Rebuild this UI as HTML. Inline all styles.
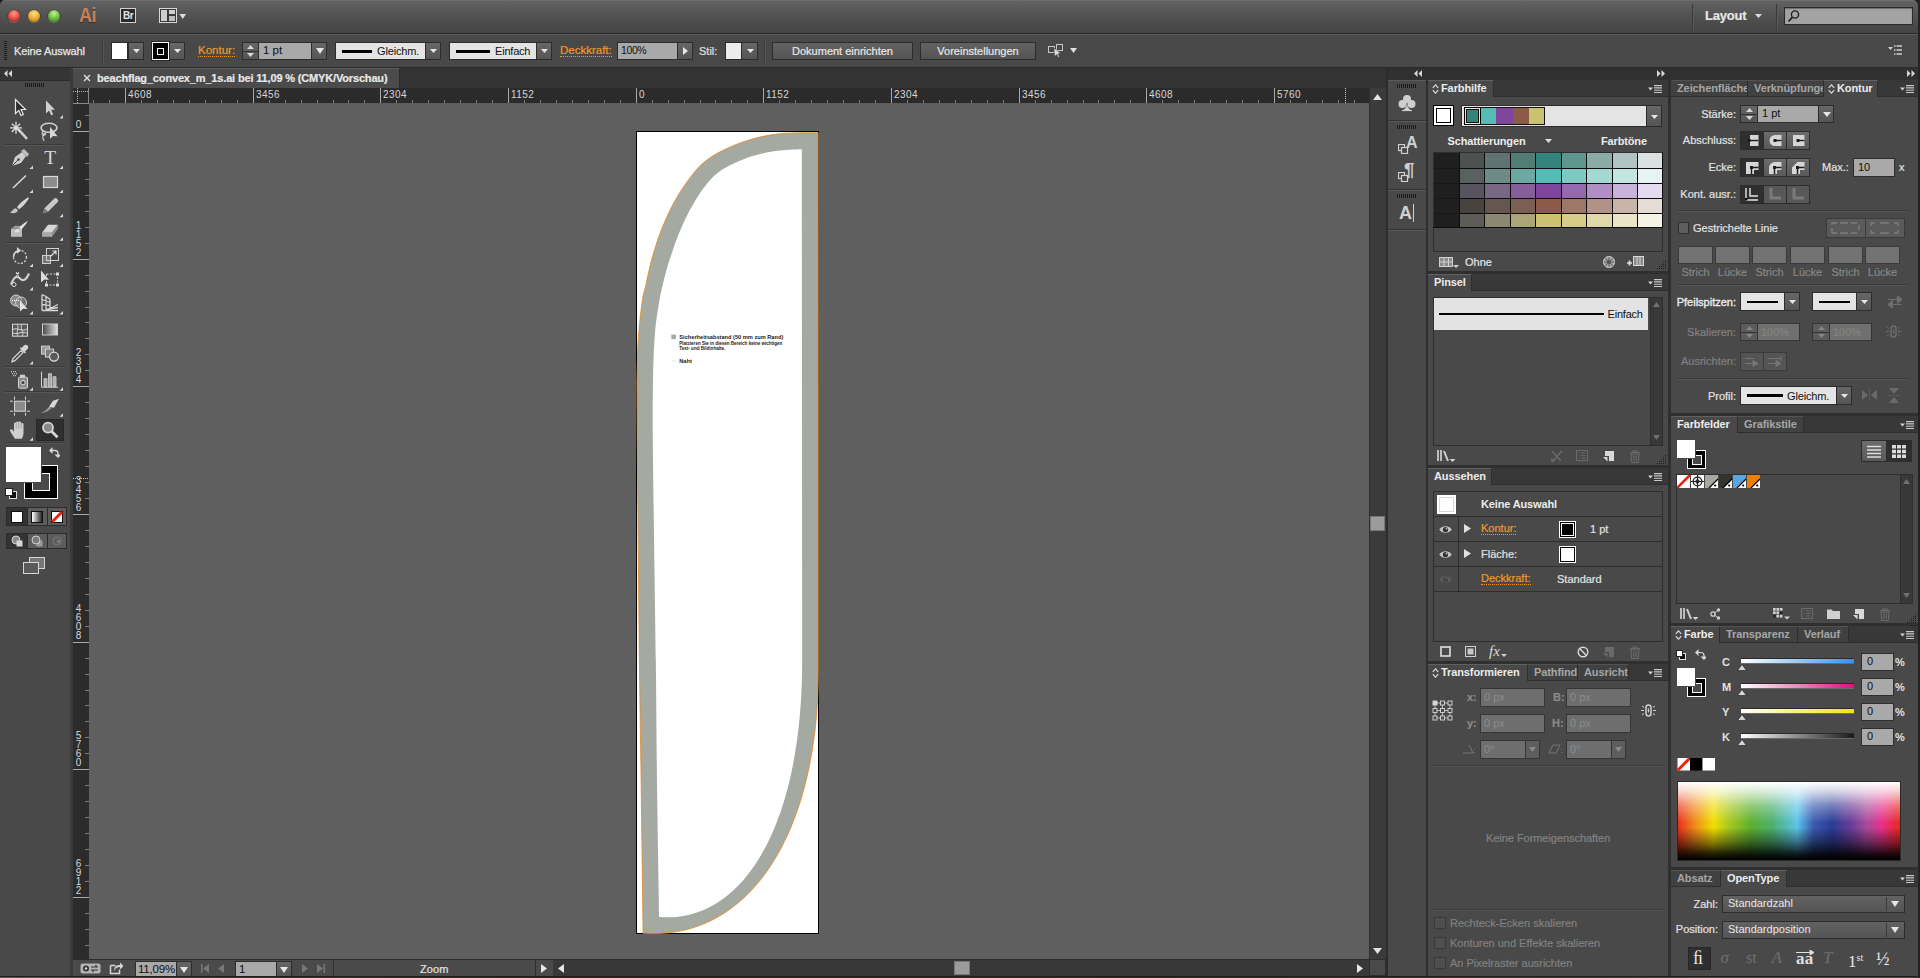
<!DOCTYPE html>
<html lang="de"><head><meta charset="utf-8"><title>beachflag_convex_m_1s.ai</title>
<style>
html,body{margin:0;padding:0;background:#494949;overflow:hidden}
body{width:1920px;height:978px;position:relative;font-family:"Liberation Sans",sans-serif;font-size:11px;color:#dcdcdc}
div,svg{position:absolute;box-sizing:border-box}
.t{white-space:nowrap;line-height:14px;height:14px;font-size:11px;color:#e2e2e2;-webkit-text-stroke:.2px #e2e2e2}
.tb{white-space:nowrap;line-height:14px;height:14px;font-size:11px;color:#ececec;font-weight:bold;letter-spacing:-.1px}
.td{white-space:nowrap;line-height:14px;height:14px;font-size:11px;color:#8a8a8a;-webkit-text-stroke:.2px #8a8a8a}
.tk{white-space:nowrap;line-height:14px;height:14px;font-size:11px;color:#111}
.or{color:#f0982d;border-bottom:1px dotted #f0982d;height:14px;line-height:14px;-webkit-text-stroke:.2px #f0982d}
.rl{white-space:nowrap;font-family:"Liberation Sans",sans-serif;font-size:10px;line-height:10px;color:#d6d6d6;letter-spacing:.4px;transform:scaleY(1.12);transform-origin:0 0}
.inp{background:#a9a9a9;border:1px solid #2e2e2e;color:#111}
.btn{background:linear-gradient(#626262,#545454);border:1px solid #2c2c2c}
.dd{background:linear-gradient(#666,#555);border:1px solid #2c2c2c}
.light{background:#e4e4e4;border:1px solid #2c2c2c}
.tab{background:#494949;border-top:1px solid #5c5c5c}
.tabi{background:#3e3e3e;border-right:1px solid #2e2e2e}
.panel{background:#494949}
.hdr{background:#353535}
</style></head>
<body>
<div style="left:0px;top:0px;width:1920px;height:33px;background:linear-gradient(#626262,#565656 35%,#4b4b4b 70%,#454545);border-top:1px solid #6e6e6e"></div>
<div style="left:0px;top:33px;width:1920px;height:1px;background:#2b2b2b"></div>
<div style="left:0px;top:34px;width:1920px;height:33px;background:#484848;border-top:1px solid #5a5a5a"></div>
<div style="left:0px;top:67px;width:1920px;height:1px;background:#2a2a2a"></div>
<div style="left:8px;top:10px;width:12px;height:12px;border-radius:50%;background:radial-gradient(circle at 50% 30%,#ff9a8a,#e0443e 55%,#8e1d18);box-shadow:0 1px 0 rgba(255,255,255,.25),0 0 0 0.5px rgba(0,0,0,.5)"></div>
<div style="left:28px;top:10px;width:12px;height:12px;border-radius:50%;background:radial-gradient(circle at 50% 30%,#ffe08a,#e7a52c 55%,#99610d);box-shadow:0 1px 0 rgba(255,255,255,.25),0 0 0 0.5px rgba(0,0,0,.5)"></div>
<div style="left:48px;top:10px;width:12px;height:12px;border-radius:50%;background:radial-gradient(circle at 50% 30%,#c9f08e,#62b83a 55%,#2f6f16);box-shadow:0 1px 0 rgba(255,255,255,.25),0 0 0 0.5px rgba(0,0,0,.5)"></div>
<div style="left:78.5px;top:3px;font-size:21px;line-height:24px;font-weight:bold;color:#c48257;letter-spacing:-0.5px;transform:scaleX(.86);transform-origin:0 0;text-shadow:0 1px 0 rgba(0,0,0,.4)">Ai</div>
<div style="left:120px;top:8px;width:16px;height:15px;background:#2b2b2b;border:1px solid #cfcfcf;color:#e6e6e6;font-size:10px;line-height:13px;text-align:center;font-weight:bold;letter-spacing:-0.5px">Br</div>
<svg style="left:159px;top:8px;" width="28" height="15" viewBox="0 0 28 15"><rect x="0.5" y="0.5" width="17" height="14" fill="#3a3a3a" stroke="#d8d8d8"/><rect x="2" y="2" width="6" height="11" fill="#cfcfcf"/><rect x="10" y="2" width="6" height="4" fill="#cfcfcf"/><rect x="10" y="8" width="6" height="5" fill="#bdbdbd"/><path d="M20.5 6h6.5l-3.25 5z" fill="#e0e0e0"/></svg>
<div style="left:1692px;top:4px;width:1px;height:26px;background:#3c3c3c;border-right:1px solid #5a5a5a;width:2px"></div>
<div style="left:1776px;top:4px;width:1px;height:26px;background:#3c3c3c;border-right:1px solid #5a5a5a;width:2px"></div>
<div class="t" style="left:1705px;top:8px;font-size:13px;font-weight:bold;color:#e8e8e8;line-height:16px;height:16px;letter-spacing:-.2px">Layout</div>
<svg style="left:1755px;top:14px;" width="7" height="4" viewBox="0 0 7 4"><path d="M0 0h7l-3.5 4z" fill="#ddd"/></svg>
<div style="left:1784px;top:7px;width:129px;height:18px;background:#a3a3a3;border:1px solid #2a2a2a;box-shadow:inset 0 1px 1px rgba(0,0,0,.35)"></div>
<svg style="left:1787px;top:9px;" width="14" height="14" viewBox="0 0 14 14"><circle cx="8" cy="5.5" r="3.6" fill="none" stroke="#222" stroke-width="1.4"/><path d="M5.4 8.2L1.5 12.5" stroke="#222" stroke-width="1.8"/></svg>
<div style="left:4px;top:41px;width:3px;height:19px;background:repeating-linear-gradient(#1e1e1e 0 1px,transparent 1px 2px)"></div>
<div class="t" style="left:14px;top:44px;color:#e6e6e6;letter-spacing:-.1px;-webkit-text-stroke:.25px #e6e6e6">Keine Auswahl</div>
<div style="left:102px;top:38px;width:1px;height:26px;width:2px;background:#3a3a3a;border-right:1px solid #565656"></div>
<div style="left:111px;top:42px;width:17px;height:18px;background:#fff;border:1px solid #2a2a2a"></div>
<div class="dd" style="left:128px;top:42px;width:16px;height:18px;"><svg style="left:4px;top:6px" width="7" height="4"><path d="M0 0h7l-3.5 4z" fill="#e6e6e6"/></svg></div>
<div style="left:152px;top:42px;width:17px;height:18px;background:#000;border:1px solid #fff;outline:1px solid #2a2a2a"><div style="left:4px;top:4.5px;width:7px;height:7px;border:1.5px solid #fff;background:#000"></div></div>
<div class="dd" style="left:169px;top:42px;width:16px;height:18px;"><svg style="left:4px;top:6px" width="7" height="4"><path d="M0 0h7l-3.5 4z" fill="#e6e6e6"/></svg></div>
<div class="t or" style="left:198px;top:43px;font-size:11.5px">Kontur:</div>
<div class="dd" style="left:242px;top:42px;width:17px;height:18px;"><svg style="left:4px;top:2px" width="7" height="12"><path d="M0 4l3.5-4 3.5 4zM0 8h7l-3.5 4z" fill="#d8d8d8"/></svg><div style="left:0;top:7.5px;width:15px;height:1px;background:#333"></div></div>
<div class="inp" style="left:258px;top:42px;width:54px;height:18px;padding-left:4px;line-height:15px;font-size:11.5px">1 pt</div>
<div class="dd" style="left:311px;top:42px;width:16px;height:18px;"><svg style="left:3.5px;top:5px" width="8" height="6"><path d="M0 0h8l-4 6z" fill="#e6e6e6"/></svg></div>
<div class="light" style="left:335px;top:42px;width:91px;height:18px;"><div style="left:6px;top:6.5px;width:30px;height:3px;background:#000"></div><div class="tk" style="left:41px;top:1px;font-size:11px;letter-spacing:-.15px">Gleichm.</div></div>
<div class="dd" style="left:425px;top:42px;width:16px;height:18px;"><svg style="left:4px;top:6px" width="7" height="4"><path d="M0 0h7l-3.5 4z" fill="#e6e6e6"/></svg></div>
<div class="light" style="left:449px;top:42px;width:88px;height:18px;"><div style="left:6px;top:6.5px;width:34px;height:3px;background:#000"></div><div class="tk" style="left:45px;top:1px;font-size:11px;letter-spacing:-.2px">Einfach</div></div>
<div class="dd" style="left:536px;top:42px;width:16px;height:18px;"><svg style="left:4px;top:6px" width="7" height="4"><path d="M0 0h7l-3.5 4z" fill="#e6e6e6"/></svg></div>
<div class="t or" style="left:560px;top:43px;font-size:11.5px">Deckkraft:</div>
<div class="inp" style="left:617px;top:42px;width:61px;height:18px;padding-left:3px;line-height:15px;font-size:10.5px;letter-spacing:-.4px">100%</div>
<div class="dd" style="left:677px;top:42px;width:16px;height:18px;"><svg style="left:5px;top:4px" width="5" height="8"><path d="M0 0v8l5-4z" fill="#e6e6e6"/></svg></div>
<div class="t" style="left:699px;top:44px;color:#e0e0e0">Stil:</div>
<div style="left:725px;top:42px;width:17px;height:18px;background:#ececec;border:1px solid #2a2a2a"></div>
<div class="dd" style="left:741px;top:42px;width:17px;height:18px;"><svg style="left:4.5px;top:6px" width="7" height="4"><path d="M0 0h7l-3.5 4z" fill="#e6e6e6"/></svg></div>
<div style="left:764px;top:38px;width:1px;height:26px;width:2px;background:#3a3a3a;border-right:1px solid #565656"></div>
<div class="btn" style="left:772px;top:42px;width:141px;height:18px;text-align:center;line-height:16px;color:#e8e8e8;font-size:11px;letter-spacing:0;-webkit-text-stroke:.2px #e8e8e8">Dokument einrichten</div>
<div class="btn" style="left:920px;top:42px;width:116px;height:18px;text-align:center;line-height:16px;color:#e8e8e8;font-size:11px;letter-spacing:0;-webkit-text-stroke:.2px #e8e8e8">Voreinstellungen</div>
<svg style="left:1047px;top:43px;" width="17" height="15" viewBox="0 0 17 15"><rect x="1.5" y="3.5" width="6" height="6" fill="none" stroke="#c8c8c8"/><rect x="9.500" y="1.500" width="6" height="6" fill="none" stroke="#c8c8c8"/><path d="M7 5l7 5.500-3 .3 1.600 3-1.300.6-1.600-3-2 2z" fill="#e0e0e0" stroke="#333" stroke-width=".5"/></svg>
<svg style="left:1070px;top:48px;" width="7" height="5" viewBox="0 0 7 5"><path d="M0 0h7l-3.5 5z" fill="#e0e0e0"/></svg>
<svg style="left:1888px;top:45px;" width="14" height="10" viewBox="0 0 14 10"><path d="M0 2h5l-2.500 3z" fill="#d0d0d0"/><path d="M6 1h1.500M6 5h1.500M6 9h1.500M8.500 1H14M8.500 5H14M8.500 9H14" stroke="#d0d0d0" stroke-width="1.500"/></svg>
<div style="left:70px;top:68px;width:1318px;height:20px;background:#333"></div>
<div style="left:73px;top:68px;width:327px;height:20px;background:#4b4b4b;border-top:1px solid #5e5e5e;border-right:1px solid #2a2a2a"></div>
<svg style="left:83px;top:74px;" width="8" height="8" viewBox="0 0 8 8"><path d="M1 1l6 6M7 1l-6 6" stroke="#e0e0e0" stroke-width="1.400"/></svg>
<div class="t" style="left:97px;top:71px;font-weight:bold;color:#e8e8e8;font-size:11px;letter-spacing:-.16px">beachflag_convex_m_1s.ai bei 11,09 % (CMYK/Vorschau)</div>
<div style="left:70px;top:68px;width:3px;height:910px;background:#3a3a3a"></div>
<div style="left:73px;top:88px;width:1296px;height:16px;background:#2b2b2b"></div>
<div style="left:73px;top:104px;width:16px;height:855px;background:#2b2b2b"></div>
<svg style="left:73px;top:88px;" width="16" height="16" viewBox="0 0 16 16"><path d="M0 3.500h15M4.500 0v15" stroke="#b0b0b0" stroke-width="1" stroke-dasharray="1 1"/><path d="M15.500 0v16M0 15.500h16" stroke="#8a8a8a" stroke-width="1"/></svg>
<div style="left:89px;top:104px;width:1280px;height:855px;background:#5f5f5f"></div>
<svg style="left:73px;top:88px;" width="1296" height="16" viewBox="0 0 1296 16"><path d="M20.5 12v4" stroke="#7c7c7c"/><path d="M36.5 12v4" stroke="#7c7c7c"/><path d="M52.5 0v16" stroke="#a8a8a8"/><path d="M68.5 12v4" stroke="#7c7c7c"/><path d="M84.5 12v4" stroke="#7c7c7c"/><path d="M100.5 12v4" stroke="#7c7c7c"/><path d="M116.5 12v4" stroke="#7c7c7c"/><path d="M132.5 12v4" stroke="#7c7c7c"/><path d="M148.5 12v4" stroke="#7c7c7c"/><path d="M164.5 12v4" stroke="#7c7c7c"/><path d="M180.5 0v16" stroke="#a8a8a8"/><path d="M196.5 12v4" stroke="#7c7c7c"/><path d="M212.5 12v4" stroke="#7c7c7c"/><path d="M228.5 12v4" stroke="#7c7c7c"/><path d="M244.5 12v4" stroke="#7c7c7c"/><path d="M260.5 12v4" stroke="#7c7c7c"/><path d="M275.5 12v4" stroke="#7c7c7c"/><path d="M291.5 12v4" stroke="#7c7c7c"/><path d="M307.5 0v16" stroke="#a8a8a8"/><path d="M323.5 12v4" stroke="#7c7c7c"/><path d="M339.5 12v4" stroke="#7c7c7c"/><path d="M355.5 12v4" stroke="#7c7c7c"/><path d="M371.5 12v4" stroke="#7c7c7c"/><path d="M387.5 12v4" stroke="#7c7c7c"/><path d="M403.5 12v4" stroke="#7c7c7c"/><path d="M419.5 12v4" stroke="#7c7c7c"/><path d="M435.5 0v16" stroke="#a8a8a8"/><path d="M451.5 12v4" stroke="#7c7c7c"/><path d="M467.5 12v4" stroke="#7c7c7c"/><path d="M483.5 12v4" stroke="#7c7c7c"/><path d="M499.5 12v4" stroke="#7c7c7c"/><path d="M515.5 12v4" stroke="#7c7c7c"/><path d="M531.5 12v4" stroke="#7c7c7c"/><path d="M547.5 12v4" stroke="#7c7c7c"/><path d="M563.5 0v16" stroke="#a8a8a8"/><path d="M579.5 12v4" stroke="#7c7c7c"/><path d="M595.5 12v4" stroke="#7c7c7c"/><path d="M611.5 12v4" stroke="#7c7c7c"/><path d="M627.5 12v4" stroke="#7c7c7c"/><path d="M642.5 12v4" stroke="#7c7c7c"/><path d="M658.5 12v4" stroke="#7c7c7c"/><path d="M674.5 12v4" stroke="#7c7c7c"/><path d="M690.5 0v16" stroke="#a8a8a8"/><path d="M706.5 12v4" stroke="#7c7c7c"/><path d="M722.5 12v4" stroke="#7c7c7c"/><path d="M738.5 12v4" stroke="#7c7c7c"/><path d="M754.5 12v4" stroke="#7c7c7c"/><path d="M770.5 12v4" stroke="#7c7c7c"/><path d="M786.5 12v4" stroke="#7c7c7c"/><path d="M802.5 12v4" stroke="#7c7c7c"/><path d="M818.5 0v16" stroke="#a8a8a8"/><path d="M834.5 12v4" stroke="#7c7c7c"/><path d="M850.5 12v4" stroke="#7c7c7c"/><path d="M866.5 12v4" stroke="#7c7c7c"/><path d="M882.5 12v4" stroke="#7c7c7c"/><path d="M898.5 12v4" stroke="#7c7c7c"/><path d="M914.5 12v4" stroke="#7c7c7c"/><path d="M930.5 12v4" stroke="#7c7c7c"/><path d="M946.5 0v16" stroke="#a8a8a8"/><path d="M962.5 12v4" stroke="#7c7c7c"/><path d="M978.5 12v4" stroke="#7c7c7c"/><path d="M994.5 12v4" stroke="#7c7c7c"/><path d="M1010.5 12v4" stroke="#7c7c7c"/><path d="M1025.5 12v4" stroke="#7c7c7c"/><path d="M1041.5 12v4" stroke="#7c7c7c"/><path d="M1057.5 12v4" stroke="#7c7c7c"/><path d="M1073.5 0v16" stroke="#a8a8a8"/><path d="M1089.5 12v4" stroke="#7c7c7c"/><path d="M1105.5 12v4" stroke="#7c7c7c"/><path d="M1121.5 12v4" stroke="#7c7c7c"/><path d="M1137.5 12v4" stroke="#7c7c7c"/><path d="M1153.5 12v4" stroke="#7c7c7c"/><path d="M1169.5 12v4" stroke="#7c7c7c"/><path d="M1185.5 12v4" stroke="#7c7c7c"/><path d="M1201.5 0v16" stroke="#a8a8a8"/><path d="M1217.5 12v4" stroke="#7c7c7c"/><path d="M1233.5 12v4" stroke="#7c7c7c"/><path d="M1249.5 12v4" stroke="#7c7c7c"/><path d="M1265.5 12v4" stroke="#7c7c7c"/><path d="M1281.5 12v4" stroke="#7c7c7c"/></svg>
<div class="rl" style="left:128px;top:89px">4608</div>
<div class="rl" style="left:256px;top:89px">3456</div>
<div class="rl" style="left:383px;top:89px">2304</div>
<div class="rl" style="left:511px;top:89px">1152</div>
<div class="rl" style="left:639px;top:89px">0</div>
<div class="rl" style="left:766px;top:89px">1152</div>
<div class="rl" style="left:894px;top:89px">2304</div>
<div class="rl" style="left:1022px;top:89px">3456</div>
<div class="rl" style="left:1149px;top:89px">4608</div>
<div class="rl" style="left:1277px;top:89px">5760</div>
<svg style="left:73px;top:104px;" width="16" height="855" viewBox="0 0 16 855"><path d="M12 11.5h4" stroke="#7c7c7c"/><path d="M0 27.5h16" stroke="#a8a8a8"/><path d="M12 43.5h4" stroke="#7c7c7c"/><path d="M12 59.5h4" stroke="#7c7c7c"/><path d="M12 75.5h4" stroke="#7c7c7c"/><path d="M12 91.5h4" stroke="#7c7c7c"/><path d="M12 107.5h4" stroke="#7c7c7c"/><path d="M12 123.5h4" stroke="#7c7c7c"/><path d="M12 139.5h4" stroke="#7c7c7c"/><path d="M0 155.5h16" stroke="#a8a8a8"/><path d="M12 171.5h4" stroke="#7c7c7c"/><path d="M12 187.5h4" stroke="#7c7c7c"/><path d="M12 203.5h4" stroke="#7c7c7c"/><path d="M12 218.5h4" stroke="#7c7c7c"/><path d="M12 234.5h4" stroke="#7c7c7c"/><path d="M12 250.5h4" stroke="#7c7c7c"/><path d="M12 266.5h4" stroke="#7c7c7c"/><path d="M0 282.5h16" stroke="#a8a8a8"/><path d="M12 298.5h4" stroke="#7c7c7c"/><path d="M12 314.5h4" stroke="#7c7c7c"/><path d="M12 330.5h4" stroke="#7c7c7c"/><path d="M12 346.5h4" stroke="#7c7c7c"/><path d="M12 362.5h4" stroke="#7c7c7c"/><path d="M12 378.5h4" stroke="#7c7c7c"/><path d="M12 394.5h4" stroke="#7c7c7c"/><path d="M0 410.5h16" stroke="#a8a8a8"/><path d="M12 426.5h4" stroke="#7c7c7c"/><path d="M12 442.5h4" stroke="#7c7c7c"/><path d="M12 458.5h4" stroke="#7c7c7c"/><path d="M12 474.5h4" stroke="#7c7c7c"/><path d="M12 490.5h4" stroke="#7c7c7c"/><path d="M12 506.5h4" stroke="#7c7c7c"/><path d="M12 522.5h4" stroke="#7c7c7c"/><path d="M0 538.5h16" stroke="#a8a8a8"/><path d="M12 554.5h4" stroke="#7c7c7c"/><path d="M12 570.5h4" stroke="#7c7c7c"/><path d="M12 586.5h4" stroke="#7c7c7c"/><path d="M12 601.5h4" stroke="#7c7c7c"/><path d="M12 617.5h4" stroke="#7c7c7c"/><path d="M12 633.5h4" stroke="#7c7c7c"/><path d="M12 649.5h4" stroke="#7c7c7c"/><path d="M0 665.5h16" stroke="#a8a8a8"/><path d="M12 681.5h4" stroke="#7c7c7c"/><path d="M12 697.5h4" stroke="#7c7c7c"/><path d="M12 713.5h4" stroke="#7c7c7c"/><path d="M12 729.5h4" stroke="#7c7c7c"/><path d="M12 745.5h4" stroke="#7c7c7c"/><path d="M12 761.5h4" stroke="#7c7c7c"/><path d="M12 777.5h4" stroke="#7c7c7c"/><path d="M0 793.5h16" stroke="#a8a8a8"/><path d="M12 809.5h4" stroke="#7c7c7c"/><path d="M12 825.5h4" stroke="#7c7c7c"/><path d="M12 841.5h4" stroke="#7c7c7c"/></svg>
<div class="rl" style="left:74px;top:119.0px;width:9px;text-align:center;letter-spacing:0">0</div>
<div class="rl" style="left:74px;top:219.7px;width:9px;text-align:center;letter-spacing:0">1</div>
<div class="rl" style="left:74px;top:228.7px;width:9px;text-align:center;letter-spacing:0">1</div>
<div class="rl" style="left:74px;top:237.7px;width:9px;text-align:center;letter-spacing:0">5</div>
<div class="rl" style="left:74px;top:246.7px;width:9px;text-align:center;letter-spacing:0">2</div>
<div class="rl" style="left:74px;top:347.3px;width:9px;text-align:center;letter-spacing:0">2</div>
<div class="rl" style="left:74px;top:356.3px;width:9px;text-align:center;letter-spacing:0">3</div>
<div class="rl" style="left:74px;top:365.3px;width:9px;text-align:center;letter-spacing:0">0</div>
<div class="rl" style="left:74px;top:374.3px;width:9px;text-align:center;letter-spacing:0">4</div>
<div class="rl" style="left:74px;top:475.0px;width:9px;text-align:center;letter-spacing:0">3</div>
<div class="rl" style="left:74px;top:484.0px;width:9px;text-align:center;letter-spacing:0">4</div>
<div class="rl" style="left:74px;top:493.0px;width:9px;text-align:center;letter-spacing:0">5</div>
<div class="rl" style="left:74px;top:502.0px;width:9px;text-align:center;letter-spacing:0">6</div>
<div class="rl" style="left:74px;top:602.6px;width:9px;text-align:center;letter-spacing:0">4</div>
<div class="rl" style="left:74px;top:611.6px;width:9px;text-align:center;letter-spacing:0">6</div>
<div class="rl" style="left:74px;top:620.6px;width:9px;text-align:center;letter-spacing:0">0</div>
<div class="rl" style="left:74px;top:629.6px;width:9px;text-align:center;letter-spacing:0">8</div>
<div class="rl" style="left:74px;top:730.3px;width:9px;text-align:center;letter-spacing:0">5</div>
<div class="rl" style="left:74px;top:739.3px;width:9px;text-align:center;letter-spacing:0">7</div>
<div class="rl" style="left:74px;top:748.3px;width:9px;text-align:center;letter-spacing:0">6</div>
<div class="rl" style="left:74px;top:757.3px;width:9px;text-align:center;letter-spacing:0">0</div>
<div class="rl" style="left:74px;top:858.0px;width:9px;text-align:center;letter-spacing:0">6</div>
<div class="rl" style="left:74px;top:867.0px;width:9px;text-align:center;letter-spacing:0">9</div>
<div class="rl" style="left:74px;top:876.0px;width:9px;text-align:center;letter-spacing:0">1</div>
<div class="rl" style="left:74px;top:885.0px;width:9px;text-align:center;letter-spacing:0">2</div>
<div style="left:89px;top:103px;width:1280px;height:1px;background:#5c5c5c"></div>
<svg style="left:1345px;top:88px;" width="1" height="15" viewBox="0 0 1 15"><path d="M.5 0v15" stroke="#c8c8c8" stroke-dasharray="1 1"/></svg>
<svg style="left:73px;top:478px;" width="15" height="1" viewBox="0 0 15 1"><path d="M0 .5h15" stroke="#c8c8c8" stroke-dasharray="1 1"/></svg>
<div style="left:636px;top:131px;width:183px;height:803px;background:#fff;border:1px solid #000"></div>
<svg style="left:0px;top:0px;pointer-events:none" width="1920" height="978" viewBox="0 0 1920 978"><path d="M818.2 132.7C814.1 132.7 800.5 132.7 793.7 132.9C786.9 133.1 782.8 133.3 777.3 134.0C771.8 134.7 766.3 135.6 760.9 136.8C755.5 138.0 750.0 139.6 744.6 141.4C739.2 143.2 733.1 145.7 728.2 147.9C723.3 150.1 719.2 152.1 715.1 154.5C711.0 156.9 706.9 159.9 703.6 162.6C700.3 165.3 698.2 167.7 695.5 170.8C692.8 174.0 690.0 177.7 687.3 181.5C684.6 185.3 681.8 189.2 679.1 193.7C676.4 198.2 673.6 203.0 670.9 208.5C668.2 214.0 665.2 220.5 662.7 226.5C660.2 232.5 658.2 238.2 656.2 244.5C654.2 250.8 652.2 257.4 650.5 264.1C648.8 270.9 647.2 279.0 645.9 285.0C644.5 291.0 643.6 292.1 642.4 300.0C641.2 307.9 639.6 321.9 638.8 332.7C637.9 343.5 637.6 350.4 637.3 365.0C637.0 379.6 636.8 370.8 637.1 420.0C637.5 469.2 638.7 600.0 639.4 660.0C640.1 720.0 640.5 734.5 641.1 780.0C641.7 825.5 642.8 907.8 643.1 933.3C753.6 941.0 818.3 826.7 818.3 671.9L818.3 400Z M801.8 149.2C799.1 149.3 791.0 149.4 785.5 149.9C780.0 150.4 774.6 151.0 769.1 152.0C763.6 153.0 758.2 154.4 752.7 156.1C747.2 157.8 741.6 160.0 736.4 162.3C731.2 164.6 725.7 167.3 721.6 170.0C717.5 172.7 714.8 175.2 711.8 178.2C708.8 181.2 706.3 184.3 703.6 188.0C700.9 191.7 698.2 195.8 695.5 200.3C692.8 204.8 690.0 209.6 687.3 215.0C684.6 220.4 681.6 227.0 679.1 233.0C676.6 239.0 674.5 245.0 672.5 251.0C670.5 257.0 668.4 263.3 666.8 269.0C665.2 274.7 663.9 279.8 662.7 285.0C661.5 290.2 660.8 292.1 659.5 300.0C658.2 307.9 656.1 319.1 655.0 332.7C653.9 346.3 653.3 360.6 653.0 381.8C652.7 403.0 652.5 413.6 653.0 460.0C653.5 506.4 655.1 606.7 655.8 660.0C656.5 713.3 656.5 737.2 657.0 780.0C657.5 822.8 658.8 894.2 659.1 917.0C739.9 923.8 802.2 831.2 802.2 660.6L802 400Z" fill="#a4a9a1" fill-rule="evenodd"/><path d="M818.2 132.7C814.1 132.7 800.5 132.7 793.7 132.9C786.9 133.1 782.8 133.3 777.3 134.0C771.8 134.7 766.3 135.6 760.9 136.8C755.5 138.0 750.0 139.6 744.6 141.4C739.2 143.2 733.1 145.7 728.2 147.9C723.3 150.1 719.2 152.1 715.1 154.5C711.0 156.9 706.9 159.9 703.6 162.6C700.3 165.3 698.2 167.7 695.5 170.8C692.8 174.0 690.0 177.7 687.3 181.5C684.6 185.3 681.8 189.2 679.1 193.7C676.4 198.2 673.6 203.0 670.9 208.5C668.2 214.0 665.2 220.5 662.7 226.5C660.2 232.5 658.2 238.2 656.2 244.5C654.2 250.8 652.2 257.4 650.5 264.1C648.8 270.9 647.2 279.0 645.9 285.0C644.5 291.0 643.6 292.1 642.4 300.0C641.2 307.9 639.6 321.9 638.8 332.7C637.9 343.5 637.6 350.4 637.3 365.0C637.0 379.6 636.8 370.8 637.1 420.0C637.5 469.2 638.7 600.0 639.4 660.0C640.1 720.0 640.5 734.5 641.1 780.0C641.7 825.5 642.8 907.8 643.1 933.3C753.6 941.0 818.3 826.7 818.3 671.9L818.3 400Z" fill="none" stroke="#e8861f" stroke-width=".8"/><rect x="671.3" y="334.600" width="4.6" height="4.6" fill="#a4a9a1"/><path d="M672 361h4" stroke="#b9c4d8" stroke-width=".5"/><g font-family="Liberation Sans, sans-serif" font-weight="bold" fill="#1a1a1a"><text x="679.3" y="339.200" font-size="5.6" textLength="104" lengthAdjust="spacingAndGlyphs">Sicherheitsabstand (50 mm zum Rand)</text><text x="679.3" y="344.700" font-size="4.6" textLength="103" lengthAdjust="spacingAndGlyphs">Platzieren Sie in diesen Bereich keine wichtigen</text><text x="679.3" y="350.400" font-size="4.6" textLength="46" lengthAdjust="spacingAndGlyphs">Text- und Bildinhalte.</text><text x="679.3" y="362.800" font-size="5.2" textLength="12.500" lengthAdjust="spacingAndGlyphs">Naht</text></g></svg>
<div style="left:1369px;top:88px;width:17px;height:871px;background:#3b3b3b;border-left:1px solid #2e2e2e"></div>
<svg style="left:1373px;top:94px;" width="9" height="6" viewBox="0 0 9 6"><path d="M0 6h9L4.500 0z" fill="#e2e2e2"/></svg>
<svg style="left:1373px;top:948px;" width="9" height="6" viewBox="0 0 9 6"><path d="M0 0h9L4.500 6z" fill="#e2e2e2"/></svg>
<div style="left:1370px;top:516px;width:15px;height:15px;background:#9b9b9b;border:1px solid #777"></div>
<div style="left:1386px;top:68px;width:2px;height:910px;background:#2c2c2c"></div>
<div style="left:73px;top:959px;width:1296px;height:17px;background:#4a4a4a;border-top:1px solid #2e2e2e"></div>
<div style="left:1369px;top:959px;width:17px;height:17px;background:#4a4a4a;border:1px solid #2e2e2e"></div>
<svg style="left:80px;top:963px;" width="21" height="11" viewBox="0 0 21 11"><rect x=".5" y=".5" width="20" height="10" rx="2" fill="#b4b4b4"/><circle cx="6" cy="5.500" r="3" fill="#333"/><circle cx="6" cy="5.500" r="1.200" fill="#d6d6d6"/><path d="M11 4h6l-1.500-2M18 7h-6l1.500 2" stroke="#333" fill="none" stroke-width="1.200"/></svg>
<svg style="left:109px;top:962px;" width="15" height="13" viewBox="0 0 15 13"><path d="M1.500 3.500h5M1.500 3.500v8h9v-4" fill="none" stroke="#d6d6d6" stroke-width="1.500"/><path d="M5 9c0-4 2-6 6-6V.5L14.500 4 11 7.500V5C8 5 6.500 6 5 9z" fill="#d6d6d6"/></svg>
<div class="inp" style="left:135px;top:961px;width:42px;height:16px;padding-left:2px;line-height:15px;font-size:11.5px;letter-spacing:-.2px">11,09%</div>
<div class="dd" style="left:176px;top:961px;width:16px;height:16px;"><svg style="left:3px;top:5px" width="8" height="6"><path d="M0 0h8l-4 6z" fill="#e6e6e6"/></svg></div>
<svg style="left:201px;top:964px;" width="8" height="9" viewBox="0 0 8 9"><path d="M0 0h1.500v9H0zM8 0v9L2 4.500z" fill="#777"/></svg>
<svg style="left:218px;top:964px;" width="6" height="9" viewBox="0 0 6 9"><path d="M6 0v9L0 4.500z" fill="#777"/></svg>
<div class="inp" style="left:235px;top:961px;width:42px;height:16px;padding-left:3px;line-height:15px;font-size:11.5px">1</div>
<div class="dd" style="left:276px;top:961px;width:16px;height:16px;"><svg style="left:3px;top:5px" width="8" height="6"><path d="M0 0h8l-4 6z" fill="#e6e6e6"/></svg></div>
<svg style="left:302px;top:964px;" width="6" height="9" viewBox="0 0 6 9"><path d="M0 0v9l6-4.500z" fill="#777"/></svg>
<svg style="left:317px;top:964px;" width="8" height="9" viewBox="0 0 8 9"><path d="M6.500 0H8v9H6.500zM0 0v9l6-4.500z" fill="#777"/></svg>
<div style="left:333px;top:960px;width:1px;height:16px;background:#2e2e2e"></div>
<div class="t" style="left:420px;top:962px;color:#e4e4e4;letter-spacing:.1px">Zoom</div>
<div style="left:535px;top:960px;width:1px;height:16px;background:#2e2e2e"></div>
<svg style="left:541px;top:964px;" width="6" height="9" viewBox="0 0 6 9"><path d="M0 0v9l6-4.500z" fill="#e6e6e6"/></svg>
<div style="left:553px;top:960px;width:816px;height:16px;background:#383838"></div>
<svg style="left:558px;top:964px;" width="6" height="9" viewBox="0 0 6 9"><path d="M6 0v9L0 4.500z" fill="#e6e6e6"/></svg>
<svg style="left:1357px;top:964px;" width="6" height="9" viewBox="0 0 6 9"><path d="M0 0v9l6-4.500z" fill="#e6e6e6"/></svg>
<div style="left:954px;top:961px;width:16px;height:14px;background:#9b9b9b;border:1px solid #777"></div>
<div style="left:0px;top:976px;width:1920px;height:1px;background:#1e1e1e;z-index:40"></div>
<div style="left:0px;top:977px;width:1920px;height:1px;background:linear-gradient(90deg,#5a5a5a,#3c3c3c 8%,#3a2020 30%,#3a2424 60%,#444 90%);z-index:40"></div>
<div style="left:0px;top:68px;width:70px;height:910px;background:#494949"></div>
<div style="left:0px;top:68px;width:70px;height:13px;background:#353535;border-bottom:1px solid #2b2b2b"></div>
<svg style="left:4px;top:70px;" width="8" height="7" viewBox="0 0 8 7"><path d="M3.500 0v7L0 3.500zM8 0v7L4.500 3.500z" fill="#d8d8d8"/></svg>
<div style="left:25px;top:83px;width:20px;height:4px;background:repeating-linear-gradient(90deg,#1c1c1c 0 1px,transparent 1px 2px)"></div>
<div style="left:5px;top:144px;width:60px;height:1px;background:#3a3a3a;border-bottom:1px solid #565656;height:2px"></div>
<div style="left:5px;top:242px;width:60px;height:1px;background:#3a3a3a;border-bottom:1px solid #565656;height:2px"></div>
<div style="left:5px;top:316px;width:60px;height:1px;background:#3a3a3a;border-bottom:1px solid #565656;height:2px"></div>
<div style="left:5px;top:366px;width:60px;height:1px;background:#3a3a3a;border-bottom:1px solid #565656;height:2px"></div>
<div style="left:5px;top:391px;width:60px;height:1px;background:#3a3a3a;border-bottom:1px solid #565656;height:2px"></div>
<div style="left:5px;top:442px;width:60px;height:1px;background:#3a3a3a;border-bottom:1px solid #565656;height:2px"></div>
<svg style="left:0px;top:0px;" width="70" height="600" viewBox="0 0 70 600"><g transform="translate(8,95.5)"><path d="M7.500 4v14l3.300-3.100 2.200 5.100 2.300-1-2.200-5H17.500z" fill="#2c2c2c" stroke="#e6e6e6" stroke-width="1.200" stroke-linejoin="miter"/></g><g transform="translate(38,95.5)"><path d="M8 5v13l3.100-2.900 2 4.700 2.100-.9-2-4.600H17z" fill="#cfcfcf"/><path d="M25 19.500v3.500h-3.500z" fill="#d8d8d8"/></g><g transform="translate(8,119.80000000000001)"><path d="M10 9l9 10" stroke="#cfcfcf" stroke-width="2.500"/><path d="M8 2v12M2 8h12M3.800 3.800l8.400 8.400M12.200 3.800l-8.400 8.400" stroke="#e0e0e0" stroke-width="1.300"/></g><g transform="translate(38,119.80000000000001)"><ellipse cx="11" cy="8" rx="8" ry="4.500" fill="none" stroke="#cfcfcf" stroke-width="1.600"/><path d="M5 11c-2 3 0 6 2 4s-1-3-2 1 1 4 1 5" fill="none" stroke="#cfcfcf" stroke-width="1.200"/><path d="M12 7v12l3-2.800 4.500.3z" fill="#d8d8d8"/></g><g transform="translate(8,146)"><path d="M4 20l3-9 7-5 4 4-5 7z" fill="#cfcfcf"/><path d="M13 5l3-2 5 5-2 3z" fill="#bdbdbd"/><path d="M4 20l6-6" stroke="#444" stroke-width="1"/><circle cx="10.500" cy="13.500" r="1.300" fill="#444"/><path d="M25 19.500v3.500h-3.500z" fill="#d8d8d8"/></g><text x="50.3" y="163.800" font-family="Liberation Serif, serif" font-size="19.500" text-anchor="middle" fill="#d9d9d9">T</text><path d="M63 165.5v3.500h-3.500z" fill="#d8d8d8"/><g transform="translate(8,170)"><path d="M5 18L18 5.500" stroke="#d8d8d8" stroke-width="1.600"/><path d="M25 19.500v3.500h-3.500z" fill="#d8d8d8"/></g><g transform="translate(38,170)"><rect x="5.500" y="6.500" width="14" height="11" fill="#8c8c8c" stroke="#d8d8d8" stroke-width="1.200"/><path d="M25 19.500v3.500h-3.500z" fill="#d8d8d8"/></g><g transform="translate(8,194.3)"><path d="M20 3c-5 3-9 7-11 10l2 2c3-2 7-6 10-11z" fill="#d6d6d6"/><path d="M8 14c-3 0-3 3-6 4 3 2 7 1 8-2z" fill="#c4c4c4"/></g><g transform="translate(38,194.3)"><path d="M5 19l1.500-5L16 4.500c1-1 2-1 3 0l.5.500c1 1 1 2 0 3L10 17.500z" fill="#c9c9c9"/><path d="M5 19l1.500-5 3.500 3.500z" fill="#777"/><path d="M25 19.500v3.500h-3.500z" fill="#d8d8d8"/></g><g transform="translate(8,217.8)"><path d="M3 11h11v8H3z" fill="#bdbdbd"/><path d="M3 11l4-3h8l-1 3" fill="#9a9a9a"/><path d="M20 3c-4 2-7 5-9 7l2 2c2-2 5-5 7-9z" fill="#e0e0e0"/><path d="M10 11c-2 0-2 2-4 3 2 1 5 1 6-1z" fill="#e0e0e0"/></g><g transform="translate(38,217.8)"><path d="M4 15l6-8h10l-6 8z" fill="#d6d6d6"/><path d="M4 15h10v4H4z" fill="#a8a8a8"/><path d="M14 15l6-8v4l-6 8z" fill="#8e8e8e"/><path d="M25 19.500v3.500h-3.500z" fill="#d8d8d8"/></g><g transform="translate(8,244)"><circle cx="12" cy="13" r="6.500" fill="none" stroke="#cfcfcf" stroke-width="1.300" stroke-dasharray="2 1.500"/><path d="M12 6.500a6.500 6.500 0 0 0-6.500 6.500" fill="none" stroke="#d8d8d8" stroke-width="1.500"/><path d="M9 3l4 3.500-4 3.200z" fill="#d8d8d8"/><path d="M25 19.500v3.500h-3.500z" fill="#d8d8d8"/></g><g transform="translate(38,244)"><rect x="4.500" y="11.500" width="8" height="8" fill="#777" stroke="#d0d0d0"/><rect x="8.500" y="4.500" width="12" height="12" fill="none" stroke="#d0d0d0"/><path d="M13 12l5-5M14.500 7H18v3.500" fill="none" stroke="#e0e0e0" stroke-width="1.200"/><path d="M25 19.500v3.500h-3.500z" fill="#d8d8d8"/></g><g transform="translate(8,267.5)"><path d="M3 17c3-8 6-9 9-6s6 2 9-5" fill="none" stroke="#cfcfcf" stroke-width="2.200"/><circle cx="6" cy="17" r="2" fill="#444" stroke="#e0e0e0"/><path d="M8 5l3 3M11 5l-3 3" stroke="#e0e0e0" stroke-width="1.300"/><path d="M25 19.500v3.500h-3.500z" fill="#d8d8d8"/></g><g transform="translate(38,267.5)"><rect x="8.500" y="6.500" width="11" height="11" fill="none" stroke="#d0d0d0" stroke-dasharray="2 1.500"/><path d="M3 3v12l3.300-3 4.700.2z" fill="#dcdcdc"/><path d="M18 5h3v3h-3zM18 16h3v3h-3zM7 16h3v3H7z" fill="#e0e0e0"/></g><g transform="translate(8,291.5)"><circle cx="8" cy="9" r="5.500" fill="#8a8a8a" stroke="#cfcfcf"/><circle cx="13" cy="11" r="5.500" fill="#8a8a8a" fill-opacity=".6" stroke="#cfcfcf"/><path d="M4 9h8" stroke="#fff" stroke-dasharray="1 1"/><path d="M12 9v11l3-2.700 4.500.2z" fill="#e0e0e0"/><path d="M25 19.500v3.500h-3.500z" fill="#d8d8d8"/></g><g transform="translate(38,291.5)"><path d="M4 3v16M8 5v13M12 8v9M4 19h16M8 18l12-2M12 17l8-4M4 3l4 2 4 3M4 8l8 3M4 13l8 1" fill="none" stroke="#d6d6d6" stroke-width="1.300"/><path d="M25 19.500v3.500h-3.500z" fill="#d8d8d8"/></g><g transform="translate(8,317.7)"><rect x="4.500" y="6.500" width="15" height="12" fill="#5a5a5a" stroke="#d6d6d6"/><path d="M4.500 12c5-3 10 3 15-1M4.500 15c5 3 10-3 15 1M9 6.500c3 4-2 8 1 12M14 6.500c-3 4 3 8 0 12" fill="none" stroke="#d6d6d6"/></g><defs><linearGradient id="tg"><stop offset="0" stop-color="#4a4a4a"/><stop offset="1" stop-color="#e0e0e0"/></linearGradient></defs><rect x="42.5" y="324.0" width="15" height="11" fill="url(#tg)" stroke="#cfcfcf"/><g transform="translate(8,341.6)"><path d="M4 20l1-3 8-8 2 2-8 8z" fill="none" stroke="#d6d6d6" stroke-width="1.300"/><path d="M12 7l5 5 1-1-1-1 2.500-2.500c1-1 1-2.500 0-3.500s-2.500-1-3.500 0L13.500 6.500l-1-1z" fill="#d6d6d6"/><path d="M25 19.500v3.500h-3.500z" fill="#d8d8d8"/></g><g transform="translate(38,341.6)"><rect x="3.500" y="4.500" width="8" height="8" fill="#9a9a9a" stroke="#cfcfcf"/><rect x="7.500" y="7.500" width="8" height="8" fill="#7a7a7a" stroke="#cfcfcf"/><circle cx="16" cy="15" r="4.500" fill="#5a5a5a" stroke="#d6d6d6" stroke-width="1.300"/></g><g transform="translate(8,367.7)"><rect x="10.500" y="9.500" width="9" height="11" rx="1" fill="#8a8a8a" stroke="#d6d6d6"/><circle cx="15" cy="15" r="2.200" fill="#444" stroke="#e6e6e6"/><path d="M12 9.500V7h5v2.500" fill="#cfcfcf"/><path d="M3 4h1M5 4h1M7 4h1M4 6h1M6 6h1M8 6h1M5 8h1M7 8h1" stroke="#e0e0e0"/><path d="M25 19.500v3.500h-3.500z" fill="#d8d8d8"/></g><g transform="translate(38,367.7)"><path d="M3.500 4v15.500H20" fill="none" stroke="#d6d6d6"/><path d="M6 11h3v8H6zM10.500 6h3v13h-3zM15 9h3v10h-3z" fill="#a8a8a8" stroke="#d6d6d6" stroke-width=".8"/><path d="M25 19.500v3.500h-3.500z" fill="#d8d8d8"/></g><g transform="translate(8,393.7)"><rect x="6.500" y="7.500" width="11" height="10" fill="#8a8a8a" stroke="#d6d6d6"/><path d="M6.500 3v3M17.500 3v3M6.500 19v3M17.500 19v3M2 7.500h3M2 17.500h3M19 7.500h3M19 17.500h3" stroke="#d6d6d6"/></g><g transform="translate(38,393.7)"><path d="M3 19c3-1 6-3 8-6l3 1c-3 3-7 5-11 5z" fill="#9a9a9a"/><path d="M11 13l4-6 6-2-5 9z" fill="#d6d6d6"/><path d="M25 19.500v3.500h-3.500z" fill="#d8d8d8"/></g><g transform="translate(8,417.7)"><path d="M7 21c-2-3-4-6-5-8 0-1.500 1.500-2 2.500-1L6 14V6c0-1.500 2-1.500 2.200 0V5c0-1.700 2.300-1.700 2.500 0v0c0-1.700 2.300-1.700 2.500 0v1.500c0-1.500 2.200-1.500 2.300 0V15c0 3-1 4.500-1.500 6z" fill="#cfcfcf"/><path d="M8.200 6v5M10.700 5v6M13.200 5v6" stroke="#8a8a8a" stroke-width=".7"/><path d="M25 19.500v3.500h-3.500z" fill="#d8d8d8"/></g><rect x="36.500" y="419.500" width="27" height="21" fill="#2f2f2f" stroke="#262626"/><g transform="translate(38,417.7)"><circle cx="10" cy="10" r="5" fill="#8a8a8a" stroke="#d6d6d6" stroke-width="1.800"/><path d="M13.500 13.500l6 6" stroke="#d6d6d6" stroke-width="2.800"/></g></svg>
<div style="left:23.7px;top:464.8px;width:34.6px;height:34.4px;background:#000;border:1px solid #fff"><div style="left:7.3px;top:7.3px;width:17.6px;height:17.6px;background:#494949;border:1px solid #fff"></div></div>
<div style="left:4.5px;top:445.5px;width:37px;height:37px;background:#fff;border:1px solid #494949"></div>
<svg style="left:49px;top:447px;" width="11" height="11" viewBox="0 0 11 11"><path d="M1.500 3.500h4.500c2 0 3 1 3 3v2" fill="none" stroke="#d8d8d8" stroke-width="1.300"/><path d="M3.500 0L0 3.500 3.500 7zM5.500 7.500h7L9 11z" fill="#d8d8d8"/></svg>
<svg style="left:5px;top:488px;" width="13" height="12" viewBox="0 0 13 12"><rect x="4.500" y="3.500" width="7" height="7" fill="#111" stroke="#e0e0e0"/><rect x=".5" y=".5" width="7" height="7" fill="#fff" stroke="#222"/></svg>
<div style="left:6px;top:507px;width:61px;height:19px;background:#5c5c5c;border:1px solid #2b2b2b"></div>
<div style="left:7px;top:508px;width:20px;height:17px;background:#333"></div>
<div style="left:27px;top:508px;width:1px;height:17px;background:#2b2b2b"></div>
<div style="left:47px;top:508px;width:1px;height:17px;background:#2b2b2b"></div>
<div style="left:11px;top:511px;width:12px;height:12px;background:#fff;border:1px solid #111"></div>
<div style="left:31px;top:511px;width:12px;height:12px;background:linear-gradient(90deg,#fff,#222);border:1px solid #111"></div>
<svg style="left:51px;top:511px;" width="12" height="12" viewBox="0 0 12 12"><rect x=".5" y=".5" width="11" height="11" fill="#fff" stroke="#111"/><path d="M1 11L11 1" stroke="#ee2211" stroke-width="3"/></svg>
<div style="left:6px;top:533px;width:61px;height:16px;background:#5c5c5c;border:1px solid #2b2b2b"></div>
<div style="left:7px;top:534px;width:20px;height:14px;background:#333"></div>
<div style="left:27px;top:534px;width:1px;height:14px;background:#2b2b2b"></div>
<div style="left:47px;top:534px;width:1px;height:14px;background:#2b2b2b"></div>
<svg style="left:11px;top:535px;" width="12" height="12" viewBox="0 0 12 12"><circle cx="5" cy="5" r="4" fill="#8a8a8a" stroke="#d6d6d6"/><rect x="5.500" y="5.500" width="6" height="6" fill="#d6d6d6"/></svg>
<svg style="left:31px;top:535px;" width="12" height="12" viewBox="0 0 12 12"><rect x="5.500" y="5.500" width="6" height="6" fill="#9a9a9a"/><circle cx="5" cy="5" r="4" fill="#7a7a7a" stroke="#d0d0d0"/></svg>
<svg style="left:51px;top:535px;" width="12" height="12" viewBox="0 0 12 12"><circle cx="6" cy="6" r="4" fill="none" stroke="#777"/><rect x="6" y="5" width="4" height="3" fill="#777"/></svg>
<svg style="left:23px;top:557px;" width="22" height="17" viewBox="0 0 22 17"><rect x="6.500" y=".5" width="15" height="11" fill="#777" stroke="#d6d6d6"/><rect x=".5" y="5.500" width="15" height="11" fill="#5a5a5a" stroke="#d6d6d6"/></svg>
<div style="left:1388px;top:68px;width:532px;height:910px;background:#2f2f2f"></div>
<div style="left:1388px;top:68px;width:280px;height:12px;background:#303030"></div>
<div style="left:1671px;top:68px;width:249px;height:12px;background:#303030"></div>
<svg style="left:1414px;top:70px;" width="8" height="7" viewBox="0 0 8 7"><path d="M3.500 0v7L0 3.500zM8 0v7L4.500 3.500z" fill="#d8d8d8"/></svg>
<svg style="left:1657px;top:70px;" width="8" height="7" viewBox="0 0 8 7"><path d="M0 0v7l3.500-3.500zM4.500 0v7L8 3.500z" fill="#d8d8d8"/></svg>
<svg style="left:1907px;top:70px;" width="8" height="7" viewBox="0 0 8 7"><path d="M0 0v7l3.500-3.500zM4.500 0v7L8 3.500z" fill="#d8d8d8"/></svg>
<div style="left:1388px;top:80px;width:38px;height:898px;background:#494949;border-top:1px solid #5a5a5a"></div>
<div style="left:1397px;top:84px;width:19px;height:4px;background:repeating-linear-gradient(90deg,#1c1c1c 0 1px,transparent 1px 2px)"></div>
<div style="left:1397px;top:125px;width:19px;height:4px;background:repeating-linear-gradient(90deg,#1c1c1c 0 1px,transparent 1px 2px)"></div>
<div style="left:1397px;top:194px;width:19px;height:4px;background:repeating-linear-gradient(90deg,#1c1c1c 0 1px,transparent 1px 2px)"></div>
<div style="left:1388px;top:120px;width:38px;height:2px;background:#333;border-bottom:1px solid #5a5a5a"></div>
<div style="left:1388px;top:189px;width:38px;height:2px;background:#333;border-bottom:1px solid #5a5a5a"></div>
<div style="left:1388px;top:229px;width:38px;height:2px;background:#333;border-bottom:1px solid #5a5a5a"></div>
<svg style="left:1398px;top:94px;" width="18" height="18" viewBox="0 0 18 18"><circle cx="9" cy="5" r="4" fill="#cfcfcf"/><circle cx="4.500" cy="10" r="4" fill="#cfcfcf"/><circle cx="13.500" cy="10" r="4" fill="#cfcfcf"/><path d="M9 8c0 4-1 6-3.500 8h7C10 14 9 12 9 8z" fill="#cfcfcf"/><path d="M4 16.500h10" stroke="#cfcfcf" stroke-width="1.200"/></svg>
<div style="left:1406px;top:134px;font-size:16px;line-height:18px;color:#d0d0d0;font-weight:bold">A</div>
<svg style="left:1398px;top:144px;" width="11" height="10" viewBox="0 0 11 10"><rect x=".5" y=".5" width="6" height="6" fill="none" stroke="#d0d0d0" stroke-width="1.200"/><rect x="3.500" y="3.500" width="6" height="6" fill="#494949" stroke="#d0d0d0" stroke-width="1.200"/></svg>
<div style="left:1404px;top:161px;font-size:19px;line-height:18px;color:#d0d0d0;font-weight:bold">¶</div>
<svg style="left:1398px;top:172px;" width="11" height="10" viewBox="0 0 11 10"><rect x=".5" y=".5" width="6" height="6" fill="none" stroke="#d0d0d0" stroke-width="1.200"/><rect x="3.500" y="3.500" width="6" height="6" fill="#494949" stroke="#d0d0d0" stroke-width="1.200"/></svg>
<div style="left:1399px;top:203px;font-size:18px;line-height:20px;color:#d0d0d0;font-weight:bold">A</div>
<div style="left:1413px;top:204px;width:1px;height:18px;background:#d0d0d0"></div>
<div style="left:1428px;top:80px;width:240px;height:191px;background:#494949"></div>
<div style="left:1428px;top:80px;width:240px;height:17px;background:#383838;border-bottom:1px solid #2e2e2e"></div>
<div style="left:1428px;top:80px;width:66px;height:17px;background:#494949;border-top:1px solid #606060;border-right:1px solid #2e2e2e"></div>
<svg style="left:1432px;top:84px;" width="7" height="10" viewBox="0 0 7 10"><path d="M.8 3.800L3.500.8l2.700 3M.8 6.200l2.700 3 2.700-3" fill="none" stroke="#e0e0e0" stroke-width="1.100"/></svg>
<div class="tb" style="left:1441px;top:81px">Farbhilfe</div>
<svg style="left:1648px;top:84px;" width="14" height="11" viewBox="0 0 14 11"><path d="M0 3.500h5L2.500 6.500z" fill="#cfcfcf"/><path d="M6 1.600h8M6 3.900h8M6 6.200h8M6 8.500h8" stroke="#c8c8c8" stroke-width="1.100"/></svg>
<div style="left:1433px;top:105px;width:21px;height:21px;background:#fff;border:1px solid #000;box-shadow:inset 0 0 0 2px #fff, inset 0 0 0 3px #000"></div>
<div class="light" style="left:1461px;top:105px;width:186px;height:22px;"></div>
<div class="dd" style="left:1646px;top:105px;width:16px;height:22px;"><svg style="left:4px;top:9px" width="7" height="4"><path d="M0 0h7l-3.5 4z" fill="#e6e6e6"/></svg></div>
<div style="left:1464.0px;top:107px;width:16.4px;height:18px;background:#34847c;border-top:1px solid #111;border-bottom:1px solid #111"></div>
<div style="left:1480.2px;top:107px;width:16.4px;height:18px;background:#55bbb5;border-top:1px solid #111;border-bottom:1px solid #111"></div>
<div style="left:1496.4px;top:107px;width:16.4px;height:18px;background:#7f449c;border-top:1px solid #111;border-bottom:1px solid #111"></div>
<div style="left:1512.6px;top:107px;width:16.4px;height:18px;background:#8b5b48;border-top:1px solid #111;border-bottom:1px solid #111"></div>
<div style="left:1528.8px;top:107px;width:16.4px;height:18px;background:#cbc270;border-top:1px solid #111;border-bottom:1px solid #111;border-right:1px solid #111"></div>
<div style="left:1464px;top:107px;width:17px;height:18px;border:1px solid #000;box-shadow:inset 0 0 0 1px #e8e8e8;background:transparent"></div>
<div style="left:1466px;top:109px;width:13px;height:14px;border:1px solid #111;background:#34847c"></div>
<div class="tb" style="left:1447.5px;top:134px;font-size:11px;letter-spacing:-.15px">Schattierungen</div>
<svg style="left:1545px;top:139px;" width="7" height="4" viewBox="0 0 7 4"><path d="M0 0h7l-3.500 4z" fill="#e0e0e0"/></svg>
<div class="tb" style="left:1601px;top:134px;font-size:11px;letter-spacing:-.15px">Farbtöne</div>
<div style="left:1433px;top:152px;width:230px;height:100px;background:#494949;border:1px solid #2e2e2e"></div>
<div style="left:1433.50px;top:152.80px;width:25.75px;height:15.25px;background:#1f1f1f;"></div>
<div style="left:1458.95px;top:152.80px;width:25.75px;height:15.25px;background:#4d5251;border-left:1px solid #0c0c0c;"></div>
<div style="left:1484.40px;top:152.80px;width:25.75px;height:15.25px;background:#607271;border-left:1px solid #0c0c0c;"></div>
<div style="left:1509.85px;top:152.80px;width:25.75px;height:15.25px;background:#527d77;border-left:1px solid #0c0c0c;"></div>
<div style="left:1535.30px;top:152.80px;width:25.75px;height:15.25px;background:#34847c;border-left:1px solid #0c0c0c;"></div>
<div style="left:1560.75px;top:152.80px;width:25.75px;height:15.25px;background:#5f968e;border-left:1px solid #0c0c0c;"></div>
<div style="left:1586.20px;top:152.80px;width:25.75px;height:15.25px;background:#8aaba7;border-left:1px solid #0c0c0c;"></div>
<div style="left:1611.65px;top:152.80px;width:25.75px;height:15.25px;background:#b1c3c2;border-left:1px solid #0c0c0c;"></div>
<div style="left:1637.10px;top:152.80px;width:25.75px;height:15.25px;background:#dbe1e0;border-left:1px solid #0c0c0c;"></div>
<div style="left:1433.50px;top:167.75px;width:25.75px;height:15.25px;background:#1f1f1f;border-top:1px solid #161616;"></div>
<div style="left:1458.95px;top:167.75px;width:25.75px;height:15.25px;background:#596160;border-left:1px solid #0c0c0c;border-top:1px solid #0c0c0c;"></div>
<div style="left:1484.40px;top:167.75px;width:25.75px;height:15.25px;background:#6e8b88;border-left:1px solid #0c0c0c;border-top:1px solid #0c0c0c;"></div>
<div style="left:1509.85px;top:167.75px;width:25.75px;height:15.25px;background:#6da8a2;border-left:1px solid #0c0c0c;border-top:1px solid #0c0c0c;"></div>
<div style="left:1535.30px;top:167.75px;width:25.75px;height:15.25px;background:#55bbb5;border-left:1px solid #0c0c0c;border-top:1px solid #0c0c0c;"></div>
<div style="left:1560.75px;top:167.75px;width:25.75px;height:15.25px;background:#7dcac4;border-left:1px solid #0c0c0c;border-top:1px solid #0c0c0c;"></div>
<div style="left:1586.20px;top:167.75px;width:25.75px;height:15.25px;background:#a3d8d3;border-left:1px solid #0c0c0c;border-top:1px solid #0c0c0c;"></div>
<div style="left:1611.65px;top:167.75px;width:25.75px;height:15.25px;background:#c4e6e2;border-left:1px solid #0c0c0c;border-top:1px solid #0c0c0c;"></div>
<div style="left:1637.10px;top:167.75px;width:25.75px;height:15.25px;background:#e8f4f3;border-left:1px solid #0c0c0c;border-top:1px solid #0c0c0c;"></div>
<div style="left:1433.50px;top:182.70px;width:25.75px;height:15.25px;background:#1f1f1f;border-top:1px solid #161616;"></div>
<div style="left:1458.95px;top:182.70px;width:25.75px;height:15.25px;background:#58545f;border-left:1px solid #0c0c0c;border-top:1px solid #0c0c0c;"></div>
<div style="left:1484.40px;top:182.70px;width:25.75px;height:15.25px;background:#776684;border-left:1px solid #0c0c0c;border-top:1px solid #0c0c0c;"></div>
<div style="left:1509.85px;top:182.70px;width:25.75px;height:15.25px;background:#855f98;border-left:1px solid #0c0c0c;border-top:1px solid #0c0c0c;"></div>
<div style="left:1535.30px;top:182.70px;width:25.75px;height:15.25px;background:#7f449c;border-left:1px solid #0c0c0c;border-top:1px solid #0c0c0c;"></div>
<div style="left:1560.75px;top:182.70px;width:25.75px;height:15.25px;background:#9668ad;border-left:1px solid #0c0c0c;border-top:1px solid #0c0c0c;"></div>
<div style="left:1586.20px;top:182.70px;width:25.75px;height:15.25px;background:#ae8ec4;border-left:1px solid #0c0c0c;border-top:1px solid #0c0c0c;"></div>
<div style="left:1611.65px;top:182.70px;width:25.75px;height:15.25px;background:#c8b2da;border-left:1px solid #0c0c0c;border-top:1px solid #0c0c0c;"></div>
<div style="left:1637.10px;top:182.70px;width:25.75px;height:15.25px;background:#e6daf0;border-left:1px solid #0c0c0c;border-top:1px solid #0c0c0c;"></div>
<div style="left:1433.50px;top:197.65px;width:25.75px;height:15.25px;background:#1f1f1f;border-top:1px solid #161616;"></div>
<div style="left:1458.95px;top:197.65px;width:25.75px;height:15.25px;background:#47433f;border-left:1px solid #0c0c0c;border-top:1px solid #0c0c0c;"></div>
<div style="left:1484.40px;top:197.65px;width:25.75px;height:15.25px;background:#655750;border-left:1px solid #0c0c0c;border-top:1px solid #0c0c0c;"></div>
<div style="left:1509.85px;top:197.65px;width:25.75px;height:15.25px;background:#7b5f52;border-left:1px solid #0c0c0c;border-top:1px solid #0c0c0c;"></div>
<div style="left:1535.30px;top:197.65px;width:25.75px;height:15.25px;background:#8b5b48;border-left:1px solid #0c0c0c;border-top:1px solid #0c0c0c;"></div>
<div style="left:1560.75px;top:197.65px;width:25.75px;height:15.25px;background:#9c7869;border-left:1px solid #0c0c0c;border-top:1px solid #0c0c0c;"></div>
<div style="left:1586.20px;top:197.65px;width:25.75px;height:15.25px;background:#b09386;border-left:1px solid #0c0c0c;border-top:1px solid #0c0c0c;"></div>
<div style="left:1611.65px;top:197.65px;width:25.75px;height:15.25px;background:#c9b4aa;border-left:1px solid #0c0c0c;border-top:1px solid #0c0c0c;"></div>
<div style="left:1637.10px;top:197.65px;width:25.75px;height:15.25px;background:#e6dcd6;border-left:1px solid #0c0c0c;border-top:1px solid #0c0c0c;"></div>
<div style="left:1433.50px;top:212.60px;width:25.75px;height:15.25px;background:#1f1f1f;border-top:1px solid #161616;"></div>
<div style="left:1458.95px;top:212.60px;width:25.75px;height:15.25px;background:#5d5c56;border-left:1px solid #0c0c0c;border-top:1px solid #0c0c0c;"></div>
<div style="left:1484.40px;top:212.60px;width:25.75px;height:15.25px;background:#8a8870;border-left:1px solid #0c0c0c;border-top:1px solid #0c0c0c;"></div>
<div style="left:1509.85px;top:212.60px;width:25.75px;height:15.25px;background:#aaa678;border-left:1px solid #0c0c0c;border-top:1px solid #0c0c0c;"></div>
<div style="left:1535.30px;top:212.60px;width:25.75px;height:15.25px;background:#cbc270;border-left:1px solid #0c0c0c;border-top:1px solid #0c0c0c;"></div>
<div style="left:1560.75px;top:212.60px;width:25.75px;height:15.25px;background:#d6cd8a;border-left:1px solid #0c0c0c;border-top:1px solid #0c0c0c;"></div>
<div style="left:1586.20px;top:212.60px;width:25.75px;height:15.25px;background:#dfd8a8;border-left:1px solid #0c0c0c;border-top:1px solid #0c0c0c;"></div>
<div style="left:1611.65px;top:212.60px;width:25.75px;height:15.25px;background:#eae5c6;border-left:1px solid #0c0c0c;border-top:1px solid #0c0c0c;"></div>
<div style="left:1637.10px;top:212.60px;width:25.75px;height:15.25px;background:#f5f3e3;border-left:1px solid #0c0c0c;border-top:1px solid #0c0c0c;"></div>
<div style="left:1433px;top:227px;width:230px;height:1px;background:#0c0c0c"></div>
<div style="left:1662px;top:152px;width:1px;height:76px;background:#0c0c0c"></div>
<svg style="left:1439px;top:257px;" width="20" height="12" viewBox="0 0 20 12"><rect x=".5" y=".5" width="13" height="9" fill="#8a8a8a" stroke="#d0d0d0"/><path d="M5 .5v9M9.500 .5v9M.5 5h13" stroke="#d0d0d0"/><path d="M14 8h6l-3 3z" fill="#d0d0d0"/></svg>
<div class="t" style="left:1465px;top:255px;color:#e6e6e6">Ohne</div>
<svg style="left:1603px;top:256px;" width="12" height="12" viewBox="0 0 12 12"><circle cx="6" cy="6" r="5.500" fill="#9a9a9a" stroke="#d8d8d8"/><circle cx="6" cy="6" r="2" fill="#494949"/><path d="M6 .5v11M.5 6h11M2 2l8 8M10 2l-8 8" stroke="#5a5a5a" stroke-width=".7"/></svg>
<svg style="left:1627px;top:256px;" width="17" height="12" viewBox="0 0 17 12"><path d="M2.500 4.500v5M0 7h5" stroke="#e0e0e0" stroke-width="1.700"/><rect x="6.500" y=".5" width="10" height="9" fill="#8a8a8a" stroke="#d8d8d8"/><path d="M10 .5v9M13 .5v9" stroke="#d8d8d8"/></svg>
<svg style="left:1657px;top:260px;" width="9" height="9" viewBox="0 0 9 9"><rect x="8" y="0" width="1" height="1" fill="#1e1e1e"/><rect x="8" y="2" width="1" height="1" fill="#1e1e1e"/><rect x="6" y="2" width="1" height="1" fill="#1e1e1e"/><rect x="8" y="4" width="1" height="1" fill="#1e1e1e"/><rect x="6" y="4" width="1" height="1" fill="#1e1e1e"/><rect x="4" y="4" width="1" height="1" fill="#1e1e1e"/><rect x="8" y="6" width="1" height="1" fill="#1e1e1e"/><rect x="6" y="6" width="1" height="1" fill="#1e1e1e"/><rect x="4" y="6" width="1" height="1" fill="#1e1e1e"/><rect x="2" y="6" width="1" height="1" fill="#1e1e1e"/><rect x="8" y="8" width="1" height="1" fill="#1e1e1e"/><rect x="6" y="8" width="1" height="1" fill="#1e1e1e"/><rect x="4" y="8" width="1" height="1" fill="#1e1e1e"/><rect x="2" y="8" width="1" height="1" fill="#1e1e1e"/><rect x="0" y="8" width="1" height="1" fill="#1e1e1e"/></svg>
<div style="left:1428px;top:274px;width:240px;height:191px;background:#494949"></div>
<div style="left:1428px;top:274px;width:240px;height:17px;background:#383838;border-bottom:1px solid #2e2e2e"></div>
<div style="left:1428px;top:274px;width:44px;height:17px;background:#494949;border-top:1px solid #606060;border-right:1px solid #2e2e2e"></div>
<div class="tb" style="left:1434px;top:275px">Pinsel</div>
<svg style="left:1648px;top:278px;" width="14" height="11" viewBox="0 0 14 11"><path d="M0 3.500h5L2.500 6.500z" fill="#cfcfcf"/><path d="M6 1.600h8M6 3.900h8M6 6.200h8M6 8.500h8" stroke="#c8c8c8" stroke-width="1.100"/></svg>
<div style="left:1433px;top:297px;width:230px;height:149px;background:#494949;border:1px solid #2e2e2e"></div>
<div style="left:1434px;top:298px;width:214px;height:32px;background:#e3e3e3"></div>
<div style="left:1439px;top:313px;width:165px;height:2px;background:#000"></div>
<div class="tk" style="left:1607.5px;top:307px;font-size:11px;letter-spacing:-.2px">Einfach</div>
<div style="left:1650px;top:298px;width:12px;height:147px;background:#383838;border-left:1px solid #2e2e2e"></div>
<svg style="left:1653px;top:302px;" width="7" height="5" viewBox="0 0 7 5"><path d="M0 5h7L3.500 0z" fill="#707070"/></svg>
<svg style="left:1653px;top:435px;" width="7" height="5" viewBox="0 0 7 5"><path d="M0 0h7L3.500 5z" fill="#707070"/></svg>
<svg style="left:1437px;top:450px;" width="19" height="12" viewBox="0 0 19 12"><path d="M1 0v11M4 0v11" stroke="#d0d0d0" stroke-width="1.700"/><path d="M7 1l4 10" stroke="#d0d0d0" stroke-width="2"/><path d="M12.500 9h6l-3 3z" fill="#d0d0d0"/></svg>
<svg style="left:1551px;top:450px;" width="12" height="12" viewBox="0 0 12 12"><path d="M1 1l9 10M11 1L2 11" stroke="#6a6a6a" stroke-width="1.500"/><path d="M0 9l3 3" stroke="#6a6a6a" stroke-width="2.500"/></svg>
<svg style="left:1576px;top:450px;" width="12" height="11" viewBox="0 0 12 11"><rect x=".5" y=".5" width="11" height="10" fill="none" stroke="#6a6a6a"/><path d="M2.500 3h1M5 3h4.500M2.500 5.500h1M5 5.500h4.500M2.500 8h1M5 8h4.500" stroke="#6a6a6a"/></svg>
<svg style="left:1603px;top:450px;" width="12" height="12" viewBox="0 0 12 12"><path d="M2 1h9v10H6V6H2z" fill="#d8d8d8"/><path d="M0 7h4.500v4.500z" fill="#d8d8d8"/></svg>
<svg style="left:1629px;top:450px;" width="12" height="13" viewBox="0 0 12 13"><path d="M1 2.500h10M4 2.500V1h4v1.500" fill="none" stroke="#6a6a6a" stroke-width="1.200"/><path d="M2 4h8l-.7 8.500H2.700z" fill="none" stroke="#6a6a6a" stroke-width="1.100"/><path d="M4.500 5.500v5.500M6 5.500v5.500M7.500 5.500v5.500" stroke="#6a6a6a" stroke-width=".8"/></svg>
<svg style="left:1657px;top:455px;" width="9" height="9" viewBox="0 0 9 9"><rect x="8" y="0" width="1" height="1" fill="#1e1e1e"/><rect x="8" y="2" width="1" height="1" fill="#1e1e1e"/><rect x="6" y="2" width="1" height="1" fill="#1e1e1e"/><rect x="8" y="4" width="1" height="1" fill="#1e1e1e"/><rect x="6" y="4" width="1" height="1" fill="#1e1e1e"/><rect x="4" y="4" width="1" height="1" fill="#1e1e1e"/><rect x="8" y="6" width="1" height="1" fill="#1e1e1e"/><rect x="6" y="6" width="1" height="1" fill="#1e1e1e"/><rect x="4" y="6" width="1" height="1" fill="#1e1e1e"/><rect x="2" y="6" width="1" height="1" fill="#1e1e1e"/><rect x="8" y="8" width="1" height="1" fill="#1e1e1e"/><rect x="6" y="8" width="1" height="1" fill="#1e1e1e"/><rect x="4" y="8" width="1" height="1" fill="#1e1e1e"/><rect x="2" y="8" width="1" height="1" fill="#1e1e1e"/><rect x="0" y="8" width="1" height="1" fill="#1e1e1e"/></svg>
<div style="left:1428px;top:468px;width:240px;height:193px;background:#494949"></div>
<div style="left:1428px;top:468px;width:240px;height:17px;background:#383838;border-bottom:1px solid #2e2e2e"></div>
<div style="left:1428px;top:468px;width:64px;height:17px;background:#494949;border-top:1px solid #606060;border-right:1px solid #2e2e2e"></div>
<div class="tb" style="left:1434px;top:469px">Aussehen</div>
<svg style="left:1648px;top:472px;" width="14" height="11" viewBox="0 0 14 11"><path d="M0 3.500h5L2.500 6.500z" fill="#cfcfcf"/><path d="M6 1.600h8M6 3.900h8M6 6.200h8M6 8.500h8" stroke="#c8c8c8" stroke-width="1.100"/></svg>
<div style="left:1433px;top:491px;width:230px;height:151px;background:#494949;border:1px solid #2e2e2e"></div>
<div style="left:1434px;top:516px;width:228px;height:1px;background:#2e2e2e"></div>
<div style="left:1434px;top:541px;width:228px;height:1px;background:#2e2e2e"></div>
<div style="left:1434px;top:566px;width:228px;height:1px;background:#2e2e2e"></div>
<div style="left:1434px;top:591px;width:228px;height:1px;background:#2e2e2e"></div>
<div style="left:1458px;top:517px;width:1px;height:74px;background:#2e2e2e"></div>
<div style="left:1436.5px;top:494.5px;width:19px;height:19px;background:#fff;box-shadow:inset 0 0 0 2px #fff,inset 0 0 0 3px #d8d8d8"></div>
<div class="tb" style="left:1481px;top:497px;font-size:11px;letter-spacing:-.15px">Keine Auswahl</div>
<svg style="left:1439px;top:524.5px;" width="13" height="9" viewBox="0 0 13 9"><path d="M.3 4.500C3 .2 10 .2 12.700 4.500 10 8.800 3 8.800.3 4.500z" fill="#c4c4c4"/><circle cx="6.500" cy="4.500" r="2.600" fill="#303030"/><circle cx="7.500" cy="3.500" r=".9" fill="#c4c4c4"/></svg>
<svg style="left:1439px;top:549.5px;" width="13" height="9" viewBox="0 0 13 9"><path d="M.3 4.500C3 .2 10 .2 12.700 4.500 10 8.800 3 8.800.3 4.500z" fill="#c4c4c4"/><circle cx="6.500" cy="4.500" r="2.600" fill="#303030"/><circle cx="7.500" cy="3.500" r=".9" fill="#c4c4c4"/></svg>
<svg style="left:1439px;top:574.5px;" width="13" height="9" viewBox="0 0 13 9"><path d="M.3 4.500C3 .2 10 .2 12.700 4.500 10 8.800 3 8.800.3 4.500z" fill="#5c5c5c"/><circle cx="6.500" cy="4.500" r="2.600" fill="#444"/><circle cx="7.500" cy="3.500" r=".9" fill="#5c5c5c"/></svg>
<svg style="left:1464px;top:524px;" width="7" height="9" viewBox="0 0 7 9"><path d="M0 0v9l7-4.500z" fill="#e0e0e0"/></svg>
<svg style="left:1464px;top:549px;" width="7" height="9" viewBox="0 0 7 9"><path d="M0 0v9l7-4.500z" fill="#e0e0e0"/></svg>
<div class="t or" style="left:1481px;top:521px;font-size:11px">Kontur:</div>
<div style="left:1559px;top:521px;width:17px;height:17px;background:#000;border:1px solid #fff;box-shadow:inset 0 0 0 1px #000,inset 0 0 0 2px #fff,inset 0 0 0 3px #000"></div>
<div class="t" style="left:1590px;top:522px;font-size:11px">1 pt</div>
<div class="t" style="left:1481px;top:547px;font-size:11px">Fläche:</div>
<div style="left:1559px;top:546px;width:17px;height:17px;background:#fff;border:1px solid #fff;box-shadow:inset 0 0 0 1px #000,inset 0 0 0 2px #fff"></div>
<div class="t or" style="left:1481px;top:571px;font-size:11px">Deckkraft:</div>
<div class="t" style="left:1557px;top:572px;font-size:11px">Standard</div>
<svg style="left:1440px;top:646px;" width="11" height="11" viewBox="0 0 11 11"><rect x="1" y="1" width="9" height="9" fill="none" stroke="#e0e0e0" stroke-width="1.600"/></svg>
<svg style="left:1465px;top:646px;" width="11" height="11" viewBox="0 0 11 11"><rect x=".5" y=".5" width="10" height="10" fill="none" stroke="#d0d0d0"/><rect x="2.500" y="2.500" width="6" height="6" fill="#c8c8c8"/></svg>
<div style="left:1489px;top:643px;font-family:'Liberation Serif',serif;font-style:italic;font-size:15px;line-height:16px;color:#dcdcdc">fx</div>
<svg style="left:1501px;top:654px;" width="6" height="3" viewBox="0 0 6 3"><path d="M0 0h6l-3 3z" fill="#d0d0d0"/></svg>
<svg style="left:1577px;top:646px;" width="12" height="12" viewBox="0 0 12 12"><circle cx="6" cy="6" r="4.800" fill="none" stroke="#d8d8d8" stroke-width="1.400"/><path d="M2.600 2.600l6.800 6.800" stroke="#d8d8d8" stroke-width="1.400"/></svg>
<svg style="left:1603px;top:646px;" width="12" height="12" viewBox="0 0 12 12"><path d="M2 1h9v10H6V6H2z" fill="#6a6a6a"/><path d="M0 7h4.500v4.500z" fill="#6a6a6a"/></svg>
<svg style="left:1629px;top:646px;" width="12" height="13" viewBox="0 0 12 13"><path d="M1 2.500h10M4 2.500V1h4v1.500" fill="none" stroke="#6a6a6a" stroke-width="1.200"/><path d="M2 4h8l-.7 8.500H2.700z" fill="none" stroke="#6a6a6a" stroke-width="1.100"/><path d="M4.500 5.500v5.500M6 5.500v5.500M7.500 5.500v5.500" stroke="#6a6a6a" stroke-width=".8"/></svg>
<div style="left:1428px;top:664px;width:240px;height:312px;background:#494949"></div>
<div style="left:1428px;top:664px;width:240px;height:17px;background:#383838;border-bottom:1px solid #2e2e2e"></div>
<div style="left:1428px;top:664px;width:100px;height:17px;background:#494949;border-top:1px solid #606060;border-right:1px solid #2e2e2e"></div>
<svg style="left:1432px;top:668px;" width="7" height="10" viewBox="0 0 7 10"><path d="M.8 3.800L3.500.8l2.700 3M.8 6.200l2.700 3 2.700-3" fill="none" stroke="#e0e0e0" stroke-width="1.100"/></svg>
<div class="tb" style="left:1441px;top:665px">Transformieren</div>
<div style="left:1528px;top:664px;width:50px;height:17px;background:#414141;border-top:1px solid #525252;border-right:1px solid #2e2e2e;border-bottom:1px solid #2e2e2e;overflow:hidden"><div class="tb" style="left:6px;top:0px;color:#a6a6a6">Pathfind</div></div>
<div style="left:1578px;top:664px;width:51px;height:17px;background:#414141;border-top:1px solid #525252;border-right:1px solid #2e2e2e;border-bottom:1px solid #2e2e2e;overflow:hidden"><div class="tb" style="left:6px;top:0px;color:#a6a6a6">Ausricht</div></div>
<svg style="left:1648px;top:668px;" width="14" height="11" viewBox="0 0 14 11"><path d="M0 3.500h5L2.500 6.500z" fill="#cfcfcf"/><path d="M6 1.600h8M6 3.900h8M6 6.200h8M6 8.500h8" stroke="#c8c8c8" stroke-width="1.100"/></svg>
<div class="td" style="left:1467px;top:690px;font-weight:bold">x:</div>
<div class="td" style="left:1467px;top:716px;font-weight:bold">y:</div>
<div class="td" style="left:1553px;top:690px;font-weight:bold">B:</div>
<div class="td" style="left:1552px;top:716px;font-weight:bold">H:</div>
<div style="left:1480px;top:688px;width:65px;height:19px;background:#6e6e6e;border:1px solid #353535;color:#8c8c8c;padding-left:3px;line-height:16px;font-size:11px">0 px</div>
<div style="left:1566px;top:688px;width:65px;height:19px;background:#6e6e6e;border:1px solid #353535;color:#8c8c8c;padding-left:3px;line-height:16px;font-size:11px">0 px</div>
<div style="left:1480px;top:714px;width:65px;height:19px;background:#6e6e6e;border:1px solid #353535;color:#8c8c8c;padding-left:3px;line-height:16px;font-size:11px">0 px</div>
<div style="left:1566px;top:714px;width:65px;height:19px;background:#6e6e6e;border:1px solid #353535;color:#8c8c8c;padding-left:3px;line-height:16px;font-size:11px">0 px</div>
<div style="left:1480px;top:740px;width:60px;height:19px;background:#6e6e6e;border:1px solid #353535;color:#8c8c8c;padding-left:3px;line-height:16px;font-size:11px">0°</div>
<div style="left:1525px;top:740px;width:15px;height:19px;background:#5e5e5e;border:1px solid #353535"><svg style="left:3px;top:6px" width="7" height="5"><path d="M0 0h7l-3.5 5z" fill="#8a8a8a"/></svg></div>
<div style="left:1566px;top:740px;width:60px;height:19px;background:#6e6e6e;border:1px solid #353535;color:#8c8c8c;padding-left:3px;line-height:16px;font-size:11px">0°</div>
<div style="left:1611px;top:740px;width:15px;height:19px;background:#5e5e5e;border:1px solid #353535"><svg style="left:3px;top:6px" width="7" height="5"><path d="M0 0h7l-3.5 5z" fill="#8a8a8a"/></svg></div>
<svg style="left:1462px;top:744px;" width="14" height="10" viewBox="0 0 14 10"><path d="M1 9h10L7 1" fill="none" stroke="#777"/><path d="M12 5v1M12 8v1" stroke="#777"/></svg>
<svg style="left:1548px;top:744px;" width="15" height="10" viewBox="0 0 15 10"><path d="M1 9l4-8h7l-4 8z" fill="none" stroke="#777"/><path d="M14 5v1M14 8v1" stroke="#777"/></svg>
<svg style="left:1432px;top:700px;" width="21" height="21" viewBox="0 0 21 21"><rect x="1.0" y="1.0" width="4" height="4" fill="#d8d8d8" stroke="#d8d8d8" stroke-width=".9"/><rect x="8.5" y="1.0" width="4" height="4" fill="none" stroke="#d8d8d8" stroke-width=".9"/><rect x="16.0" y="1.0" width="4" height="4" fill="none" stroke="#d8d8d8" stroke-width=".9"/><rect x="1.0" y="8.5" width="4" height="4" fill="none" stroke="#d8d8d8" stroke-width=".9"/><rect x="8.5" y="8.5" width="4" height="4" fill="none" stroke="#d8d8d8" stroke-width=".9"/><rect x="16.0" y="8.5" width="4" height="4" fill="none" stroke="#d8d8d8" stroke-width=".9"/><rect x="1.0" y="16.0" width="4" height="4" fill="none" stroke="#d8d8d8" stroke-width=".9"/><rect x="8.5" y="16.0" width="4" height="4" fill="none" stroke="#d8d8d8" stroke-width=".9"/><rect x="16.0" y="16.0" width="4" height="4" fill="none" stroke="#d8d8d8" stroke-width=".9"/><path d="M5 3h3.500M12.500 3H16M5 10.500h3.500M12.500 10.500H16M5 18h3.500M12.500 18H16M3 5v3.500M3 12.500V16M10.500 5v3.500M10.500 12.500V16M18 5v3.500M18 12.500V16" stroke="#d8d8d8" stroke-width=".8"/></svg>
<svg style="left:1641px;top:703px;" width="15" height="15" viewBox="0 0 15 15"><rect x="5" y="2" width="5" height="11" rx="2.500" fill="none" stroke="#d0d0d0" stroke-width="1.500"/><path d="M7.500 5.500v4" stroke="#d0d0d0" stroke-width="1.300"/><path d="M0 7.500h3M12 7.500h3M1 3l2 1.500M14 3l-2 1.500M1 12l2-1.500M14 12l-2-1.500" stroke="#d0d0d0" stroke-width="1"/></svg>
<div style="left:1434px;top:765px;width:228px;height:1px;background:#3c3c3c;border-bottom:1px solid #545454;height:2px"></div>
<div class="td" style="left:1486px;top:831px;color:#808080;font-size:11px;letter-spacing:-.05px">Keine Formeigenschaften</div>
<div style="left:1434px;top:909px;width:228px;height:1px;background:#3c3c3c;border-bottom:1px solid #545454;height:2px"></div>
<div style="left:1434px;top:917px;width:12px;height:12px;background:#4e4e4e;border:1px solid #3a3a3a"></div>
<div class="td" style="left:1450px;top:916px;color:#7c7c7c;font-size:11px">Rechteck-Ecken skalieren</div>
<div style="left:1434px;top:937px;width:12px;height:12px;background:#4e4e4e;border:1px solid #3a3a3a"></div>
<div class="td" style="left:1450px;top:936px;color:#7c7c7c;font-size:11px">Konturen und Effekte skalieren</div>
<div style="left:1434px;top:957px;width:12px;height:12px;background:#4e4e4e;border:1px solid #3a3a3a"></div>
<div class="td" style="left:1450px;top:956px;color:#7c7c7c;font-size:11px">An Pixelraster ausrichten</div>
<div style="left:1671px;top:80px;width:249px;height:333px;background:#494949"></div>
<div style="left:1671px;top:80px;width:249px;height:17px;background:#383838;border-bottom:1px solid #2e2e2e"></div>
<div style="left:1671px;top:80px;width:77px;height:17px;background:#414141;border-top:1px solid #525252;border-right:1px solid #2e2e2e;border-bottom:1px solid #2e2e2e;overflow:hidden"><div class="tb" style="left:6px;top:0px;color:#a6a6a6">Zeichenfläche</div></div>
<div style="left:1748px;top:80px;width:76px;height:17px;background:#414141;border-top:1px solid #525252;border-right:1px solid #2e2e2e;border-bottom:1px solid #2e2e2e;overflow:hidden"><div class="tb" style="left:6px;top:0px;color:#a6a6a6">Verknüpfunge</div></div>
<div style="left:1824px;top:80px;width:54px;height:17px;background:#494949;border-top:1px solid #606060;border-right:1px solid #2e2e2e"></div>
<svg style="left:1828px;top:84px;" width="7" height="10" viewBox="0 0 7 10"><path d="M.8 3.800L3.500.8l2.700 3M.8 6.200l2.700 3 2.700-3" fill="none" stroke="#e0e0e0" stroke-width="1.100"/></svg>
<div class="tb" style="left:1837px;top:81px">Kontur</div>
<svg style="left:1900px;top:84px;" width="14" height="11" viewBox="0 0 14 11"><path d="M0 3.500h5L2.500 6.500z" fill="#cfcfcf"/><path d="M6 1.600h8M6 3.900h8M6 6.200h8M6 8.500h8" stroke="#c8c8c8" stroke-width="1.100"/></svg>
<div class="t" style="right:184px;top:107px;font-size:11px;">Stärke:</div>
<div class="dd" style="left:1740px;top:105px;width:18px;height:18px;"><svg style="left:4.500px;top:2px" width="7" height="12"><path d="M0 4l3.500-4 3.500 4zM0 8h7l-3.500 4z" fill="#d8d8d8"/></svg><div style="left:0;top:7.500px;width:16px;height:1px;background:#333"></div></div>
<div class="inp" style="left:1757px;top:105px;width:62px;height:18px;padding-left:4px;line-height:15px;font-size:11px">1 pt</div>
<div class="dd" style="left:1818px;top:105px;width:16px;height:18px;"><svg style="left:3.5px;top:6px" width="8" height="5"><path d="M0 0h8l-4.0 5z" fill="#e6e6e6"/></svg></div>
<div class="t" style="right:184px;top:133px;font-size:11px;">Abschluss:</div>
<div style="left:1740px;top:131px;width:70px;height:19px;background:#2c2c2c"></div>
<div style="left:1741px;top:132px;width:22px;height:17px;background:#2f2f2f"></div>
<div style="left:1764px;top:132px;width:22px;height:17px;background:linear-gradient(#6c6c6c,#595959)"></div>
<div style="left:1787px;top:132px;width:22px;height:17px;background:linear-gradient(#6c6c6c,#595959)"></div>
<svg style="left:1742px;top:132px;" width="19" height="17" viewBox="0 0 19 17"><rect x="8" y="3" width="8.500" height="11" fill="#d6d6d6"/><path d="M7 8.500h9.500" stroke="#1c1c1c" stroke-width="1.400"/><rect x="5.500" y="7" width="3" height="3" fill="#1c1c1c"/></svg>
<svg style="left:1765px;top:132px;" width="19" height="17" viewBox="0 0 19 17"><path d="M16.500 3H10a5.500 5.500 0 0 0 0 11h6.500z" fill="#d6d6d6"/><path d="M10 8.500h6.500" stroke="#1c1c1c" stroke-width="1.400"/><rect x="8.500" y="7" width="3" height="3" fill="#1c1c1c"/></svg>
<svg style="left:1788px;top:132px;" width="19" height="17" viewBox="0 0 19 17"><rect x="5" y="3" width="11.500" height="11" fill="#d6d6d6"/><path d="M10 8.500h6.500" stroke="#1c1c1c" stroke-width="1.400"/><rect x="8.500" y="7" width="3" height="3" fill="#1c1c1c"/></svg>
<div class="t" style="right:184px;top:160px;font-size:11px;">Ecke:</div>
<div style="left:1740px;top:158px;width:70px;height:19px;background:#2c2c2c"></div>
<div style="left:1741px;top:159px;width:22px;height:17px;background:#2f2f2f"></div>
<div style="left:1764px;top:159px;width:22px;height:17px;background:linear-gradient(#6c6c6c,#595959)"></div>
<div style="left:1787px;top:159px;width:22px;height:17px;background:linear-gradient(#6c6c6c,#595959)"></div>
<svg style="left:1742px;top:159px;" width="19" height="17" viewBox="0 0 19 17"><path d="M4 3h12.500v8h-4.500v4H4z" fill="#d6d6d6"/><path d="M9.500 15V8.500h7" fill="none" stroke="#1c1c1c" stroke-width="1.400"/><rect x="8" y="7" width="3" height="3" fill="#1c1c1c"/></svg>
<svg style="left:1765px;top:159px;" width="19" height="17" viewBox="0 0 19 17"><path d="M16.500 3h-6.500a6 6 0 0 0-6 6v6h8v-4h4.500z" fill="#d6d6d6"/><path d="M9.500 15V8.500h7" fill="none" stroke="#1c1c1c" stroke-width="1.400"/><rect x="8" y="7" width="3" height="3" fill="#1c1c1c"/></svg>
<svg style="left:1788px;top:159px;" width="19" height="17" viewBox="0 0 19 17"><path d="M16.500 3H9.500L4 8.500V15h8v-4h4.500z" fill="#d6d6d6"/><path d="M9.500 15V8.500h7" fill="none" stroke="#1c1c1c" stroke-width="1.400"/><rect x="8" y="7" width="3" height="3" fill="#1c1c1c"/></svg>
<div class="t" style="left:1822px;top:160px;font-size:11px">Max.:</div>
<div class="inp" style="left:1853px;top:158px;width:42px;height:19px;padding-left:4px;line-height:16px;font-size:11px">10</div>
<div class="t" style="left:1899px;top:160px;font-size:11px">x</div>
<div class="t" style="right:184px;top:187px;font-size:11px;">Kont. ausr.:</div>
<div style="left:1740px;top:185px;width:70px;height:19px;background:#2c2c2c"></div>
<div style="left:1741px;top:186px;width:22px;height:17px;background:#2f2f2f"></div>
<div style="left:1764px;top:186px;width:22px;height:17px;background:#585858"></div>
<div style="left:1787px;top:186px;width:22px;height:17px;background:#585858"></div>
<svg style="left:1742px;top:186px;" width="19" height="17" viewBox="0 0 19 17"><path d="M4 2v12h12" fill="none" stroke="#e6e6e6" stroke-width="1.400"/><path d="M8 2v8h8" fill="none" stroke="#e6e6e6" stroke-width="1.400"/><rect x="3" y="12" width="2.500" height="2.500" fill="#111"/></svg>
<svg style="left:1765px;top:186px;" width="19" height="17" viewBox="0 0 19 17"><path d="M6 2v10h10" fill="none" stroke="#7a7a7a" stroke-width="3"/></svg>
<svg style="left:1788px;top:186px;" width="19" height="17" viewBox="0 0 19 17"><path d="M6 2v10h10" fill="none" stroke="#7a7a7a" stroke-width="3"/></svg>
<div style="left:1677px;top:210px;width:232px;height:2px;background:#3c3c3c;border-bottom:1px solid #545454"></div>
<div style="left:1678px;top:222px;width:11px;height:12px;background:#5e5e5e;border:1px solid #2e2e2e"></div>
<div class="t" style="left:1693px;top:221px;font-size:11px">Gestrichelte Linie</div>
<div style="left:1826px;top:218px;width:79px;height:20px;background:#5a5a5a;border:1px solid #3a3a3a"></div>
<div style="left:1865px;top:219px;width:1px;height:18px;background:#3a3a3a"></div>
<svg style="left:1831px;top:222px;" width="30" height="12" viewBox="0 0 30 12"><path d="M1 11V6M1 3V1h5M9 1h8M20 1h6M28 3v5M1 11h5M9 11h8M20 11h6" fill="none" stroke="#7e7e7e" stroke-width="1.300"/></svg>
<svg style="left:1870px;top:222px;" width="30" height="12" viewBox="0 0 30 12"><path d="M1 4V1h4M1 8v3h4M10 1h9M10 11h9M24 1h4v3M24 11h4V8" fill="none" stroke="#7e7e7e" stroke-width="1.300"/></svg>
<div style="left:1678px;top:245.5px;width:35px;height:18.5px;background:#727272;border:1px solid #3a3a3a"></div>
<div class="td" style="left:1678px;top:265px;width:35px;text-align:center;color:#858585;font-size:11px">Strich</div>
<div style="left:1715px;top:245.5px;width:35px;height:18.5px;background:#727272;border:1px solid #3a3a3a"></div>
<div class="td" style="left:1715px;top:265px;width:35px;text-align:center;color:#858585;font-size:11px">Lücke</div>
<div style="left:1752px;top:245.5px;width:35px;height:18.5px;background:#727272;border:1px solid #3a3a3a"></div>
<div class="td" style="left:1752px;top:265px;width:35px;text-align:center;color:#858585;font-size:11px">Strich</div>
<div style="left:1790px;top:245.5px;width:35px;height:18.5px;background:#727272;border:1px solid #3a3a3a"></div>
<div class="td" style="left:1790px;top:265px;width:35px;text-align:center;color:#858585;font-size:11px">Lücke</div>
<div style="left:1828px;top:245.5px;width:35px;height:18.5px;background:#727272;border:1px solid #3a3a3a"></div>
<div class="td" style="left:1828px;top:265px;width:35px;text-align:center;color:#858585;font-size:11px">Strich</div>
<div style="left:1865px;top:245.5px;width:35px;height:18.5px;background:#727272;border:1px solid #3a3a3a"></div>
<div class="td" style="left:1865px;top:265px;width:35px;text-align:center;color:#858585;font-size:11px">Lücke</div>
<div style="left:1677px;top:284px;width:232px;height:2px;background:#3c3c3c;border-bottom:1px solid #545454"></div>
<div class="t" style="right:184px;top:295px;font-size:11px;color:#ececec;-webkit-text-stroke:.35px #ececec">Pfeilspitzen:</div>
<div class="light" style="left:1740px;top:292px;width:45px;height:19px;"><div style="left:6px;top:8px;width:31px;height:1.500px;background:#000"></div></div>
<div class="dd" style="left:1784px;top:292px;width:16px;height:19px;"><svg style="left:4px;top:7px" width="7" height="4"><path d="M0 0h7l-3.5 4z" fill="#e6e6e6"/></svg></div>
<div class="light" style="left:1812px;top:292px;width:45px;height:19px;"><div style="left:6px;top:8px;width:31px;height:1.500px;background:#000"></div></div>
<div class="dd" style="left:1856px;top:292px;width:16px;height:19px;"><svg style="left:4px;top:7px" width="7" height="4"><path d="M0 0h7l-3.5 4z" fill="#e6e6e6"/></svg></div>
<svg style="left:1888px;top:296px;" width="14" height="12" viewBox="0 0 14 12"><path d="M0 3.500h10M14 3.500l-4.500-3.500v7zM14 8.500H4M0 8.500l4.500-3.500v7z" fill="#6e6e6e" stroke="#6e6e6e" stroke-width="1.200"/></svg>
<div class="td" style="right:184px;top:325px;font-size:11px;color:#7c7c7c">Skalieren:</div>
<div style="left:1740px;top:323px;width:60px;height:18px;background:#707070;border:1px solid #353535"></div>
<div style="left:1740px;top:323px;width:18px;height:18px;background:#5c5c5c;border:1px solid #353535"><svg style="left:4.500px;top:2px" width="7" height="12"><path d="M0 4l3.500-4 3.500 4zM0 8h7l-3.500 4z" fill="#858585"/></svg><div style="left:0;top:7.500px;width:16px;height:1px;background:#353535"></div></div>
<div class="td" style="left:1761px;top:325px;color:#808080;font-size:11px">100%</div>
<div style="left:1812px;top:323px;width:60px;height:18px;background:#707070;border:1px solid #353535"></div>
<div style="left:1812px;top:323px;width:18px;height:18px;background:#5c5c5c;border:1px solid #353535"><svg style="left:4.500px;top:2px" width="7" height="12"><path d="M0 4l3.500-4 3.500 4zM0 8h7l-3.500 4z" fill="#858585"/></svg><div style="left:0;top:7.500px;width:16px;height:1px;background:#353535"></div></div>
<div class="td" style="left:1833px;top:325px;color:#808080;font-size:11px">100%</div>
<svg style="left:1886px;top:324px;" width="15" height="15" viewBox="0 0 15 15"><rect x="5" y="2" width="5" height="11" rx="2.500" fill="none" stroke="#6e6e6e" stroke-width="1.500"/><path d="M7.500 5.500v4" stroke="#6e6e6e" stroke-width="1.300"/><path d="M0 7.500h3M12 7.500h3M1 3l2 1.500M14 3l-2 1.500M1 12l2-1.500M14 12l-2-1.500" stroke="#6e6e6e" stroke-width="1"/></svg>
<div class="td" style="right:184px;top:354px;font-size:11px;color:#7c7c7c">Ausrichten:</div>
<div style="left:1740px;top:352px;width:47px;height:19px;background:#545454;border:1px solid #3a3a3a"></div>
<div style="left:1763px;top:353px;width:1px;height:17px;background:#3a3a3a"></div>
<svg style="left:1745px;top:356px;" width="14" height="11" viewBox="0 0 14 11"><path d="M0 2.500h9M0 7.500h8M8 4.500v6l5-3z" stroke="#767676" fill="#767676"/></svg>
<svg style="left:1768px;top:356px;" width="14" height="11" viewBox="0 0 14 11"><path d="M0 2.500h13M13 0v5M0 7.500h8M8 4.500v6l5-3z" stroke="#767676" fill="#767676"/></svg>
<div style="left:1677px;top:378px;width:232px;height:2px;background:#3c3c3c;border-bottom:1px solid #545454"></div>
<div class="t" style="right:184px;top:389px;font-size:11px;">Profil:</div>
<div class="light" style="left:1740px;top:386px;width:97px;height:19px;"><div style="left:6px;top:7px;width:36px;height:3px;background:#000"></div><div class="tk" style="left:46px;top:2px;font-size:11px;letter-spacing:-.15px">Gleichm.</div></div>
<div class="dd" style="left:1836px;top:386px;width:16px;height:19px;"><svg style="left:4px;top:7px" width="7" height="4"><path d="M0 0h7l-3.5 4z" fill="#e6e6e6"/></svg></div>
<svg style="left:1862px;top:389px;" width="15" height="12" viewBox="0 0 15 12"><path d="M0 1v10l6-5zM15 1v10L9 6z" fill="#6a6a6a"/><path d="M7.500 0v12" stroke="#6a6a6a" stroke-dasharray="1 1"/></svg>
<svg style="left:1888px;top:388px;" width="12" height="15" viewBox="0 0 12 15"><path d="M1 0h10L6 6zM1 15h10L6 9z" fill="#6a6a6a"/><path d="M0 7.500h12" stroke="#6a6a6a" stroke-dasharray="1 1"/></svg>
<div style="left:1671px;top:416px;width:249px;height:207px;background:#494949"></div>
<div style="left:1671px;top:416px;width:249px;height:17px;background:#383838;border-bottom:1px solid #2e2e2e"></div>
<div style="left:1671px;top:416px;width:67px;height:17px;background:#494949;border-top:1px solid #606060;border-right:1px solid #2e2e2e"></div>
<div class="tb" style="left:1677px;top:417px">Farbfelder</div>
<div style="left:1738px;top:416px;width:66px;height:17px;background:#414141;border-top:1px solid #525252;border-right:1px solid #2e2e2e;border-bottom:1px solid #2e2e2e;overflow:hidden"><div class="tb" style="left:6px;top:0px;color:#a6a6a6">Grafikstile</div></div>
<svg style="left:1900px;top:420px;" width="14" height="11" viewBox="0 0 14 11"><path d="M0 3.500h5L2.500 6.500z" fill="#cfcfcf"/><path d="M6 1.600h8M6 3.900h8M6 6.200h8M6 8.500h8" stroke="#c8c8c8" stroke-width="1.100"/></svg>
<div style="left:1687px;top:450px;width:19px;height:19px;background:#000;border:1px solid #fff"><div style="left:3.5px;top:3.5px;width:10px;height:10px;background:#494949;border:1px solid #fff"></div></div>
<div style="left:1676px;top:439px;width:20px;height:20px;background:#fff;border:1px solid #494949"></div>
<div style="left:1861px;top:440px;width:51px;height:22px;background:#2c2c2c"></div>
<div style="left:1862px;top:441px;width:24px;height:20px;background:linear-gradient(#6c6c6c,#595959)"></div>
<div style="left:1887px;top:441px;width:24px;height:20px;background:#2f2f2f"></div>
<svg style="left:1867px;top:445px;" width="14" height="13" viewBox="0 0 14 13"><path d="M0 1.500h14M0 5h14M0 8.500h14M0 12h14" stroke="#dcdcdc" stroke-width="1.600"/></svg>
<svg style="left:1892px;top:445px;" width="14" height="13" viewBox="0 0 14 13"><path d="M0 0h4v3.500H0zM5 0h4v3.500H5zM10 0h4v3.500h-4zM0 4.700h4v3.500H0zM5 4.700h4v3.500H5zM10 4.700h4v3.500h-4zM0 9.400h4v3.500H0zM5 9.400h4v3.500H5zM10 9.400h4v3.500h-4z" fill="#dcdcdc"/></svg>
<div style="left:1676px;top:474px;width:237px;height:130px;background:#494949;border:1px solid #2e2e2e"></div>
<div style="left:1900px;top:475px;width:12px;height:128px;background:#383838;border-left:1px solid #2e2e2e"></div>
<svg style="left:1903px;top:479px;" width="7" height="5" viewBox="0 0 7 5"><path d="M0 5h7L3.500 0z" fill="#707070"/></svg>
<svg style="left:1903px;top:593px;" width="7" height="5" viewBox="0 0 7 5"><path d="M0 0h7L3.500 5z" fill="#707070"/></svg>
<svg style="left:1677px;top:475px;" width="84" height="13" viewBox="0 0 84 13"><g transform="translate(0,0)"><rect width="13" height="13" fill="#fff"/><path d="M0 13L13 0" stroke="#ee2211" stroke-width="2.600"/></g><g transform="translate(14,0)"><rect width="13" height="13" fill="#fff"/><circle cx="6.500" cy="6.500" r="4.300" fill="none" stroke="#222" stroke-width="1.300"/><circle cx="6.500" cy="6.500" r="1.600" fill="none" stroke="#222" stroke-width="1.100"/><path d="M6.500 0v13M0 6.500h13" stroke="#222" stroke-width="1.100"/></g><g transform="translate(28,0)"><rect width="13" height="13" fill="#a4a9a1"/><path d="M13 4v9H4z" fill="#fff"/><path d="M13 4L4 13" stroke="#000" stroke-width="1.200"/><circle cx="10.200" cy="10.500" r="1.100" fill="#000"/></g><g transform="translate(42,0)"><rect width="13" height="13" fill="#32352e"/><path d="M13 4v9H4z" fill="#fff"/><path d="M13 4L4 13" stroke="#000" stroke-width="1.200"/><circle cx="10.200" cy="10.500" r="1.100" fill="#000"/></g><g transform="translate(56,0)"><rect width="13" height="13" fill="#57a6e4"/><path d="M13 4v9H4z" fill="#fff"/><path d="M13 4L4 13" stroke="#000" stroke-width="1.200"/><circle cx="10.200" cy="10.500" r="1.100" fill="#000"/></g><g transform="translate(70,0)"><rect width="13" height="13" fill="#ef7d00"/><path d="M13 4v9H4z" fill="#fff"/><path d="M13 4L4 13" stroke="#000" stroke-width="1.200"/><circle cx="10.200" cy="10.500" r="1.100" fill="#000"/></g></svg>
<svg style="left:1680px;top:608px;" width="19" height="12" viewBox="0 0 19 12"><path d="M1 0v11M4 0v11" stroke="#d0d0d0" stroke-width="1.700"/><path d="M7 1l4 10" stroke="#d0d0d0" stroke-width="2"/><path d="M12.500 9h6l-3 3z" fill="#d0d0d0"/></svg>
<svg style="left:1710px;top:608px;" width="11" height="12" viewBox="0 0 11 12"><circle cx="3" cy="6" r="2.200" fill="none" stroke="#d0d0d0" stroke-width="1.300"/><circle cx="8.500" cy="2" r="1.700" fill="#d0d0d0"/><circle cx="8.500" cy="10" r="1.700" fill="#d0d0d0"/><path d="M4.500 5l3-2.500M4.500 7l3 2.500" stroke="#d0d0d0"/></svg>
<svg style="left:1773px;top:608px;" width="17" height="12" viewBox="0 0 17 12"><rect x="0.0" y="0.0" width="2.700" height="2.700" fill="#d0d0d0"/><rect x="3.4" y="0.0" width="2.700" height="2.700" fill="#d0d0d0"/><rect x="6.8" y="0.0" width="2.700" height="2.700" fill="#d0d0d0"/><rect x="0.0" y="3.4" width="2.700" height="2.700" fill="#d0d0d0"/><rect x="3.4" y="3.4" width="2.700" height="2.700" fill="#d0d0d0"/><rect x="6.8" y="3.4" width="2.700" height="2.700" fill="#222"/><rect x="0.0" y="6.8" width="2.700" height="2.700" fill="#222"/><rect x="3.4" y="6.8" width="2.700" height="2.700" fill="#d0d0d0"/><rect x="6.8" y="6.8" width="2.700" height="2.700" fill="#d0d0d0"/><path d="M11 8.500h6l-3 3z" fill="#d0d0d0"/></svg>
<svg style="left:1801px;top:608px;" width="12" height="11" viewBox="0 0 12 11"><rect x=".5" y=".5" width="11" height="10" fill="none" stroke="#6a6a6a"/><path d="M2.500 3h1M5 3h4.500M2.500 5.500h1M5 5.500h4.500M2.500 8h1M5 8h4.500" stroke="#6a6a6a"/></svg>
<svg style="left:1827px;top:608px;" width="13" height="11" viewBox="0 0 13 11"><path d="M0 11V1.500h4.500L6 3h7v8z" fill="#d0d0d0"/></svg>
<svg style="left:1853px;top:608px;" width="12" height="12" viewBox="0 0 12 12"><path d="M2 1h9v10H6V6H2z" fill="#d8d8d8"/><path d="M0 7h4.500v4.500z" fill="#d8d8d8"/></svg>
<svg style="left:1879px;top:608px;" width="12" height="13" viewBox="0 0 12 13"><path d="M1 2.500h10M4 2.500V1h4v1.500" fill="none" stroke="#6a6a6a" stroke-width="1.200"/><path d="M2 4h8l-.7 8.500H2.700z" fill="none" stroke="#6a6a6a" stroke-width="1.100"/><path d="M4.500 5.500v5.500M6 5.500v5.500M7.500 5.500v5.500" stroke="#6a6a6a" stroke-width=".8"/></svg>
<svg style="left:1907px;top:614px;" width="9" height="9" viewBox="0 0 9 9"><rect x="8" y="0" width="1" height="1" fill="#1e1e1e"/><rect x="8" y="2" width="1" height="1" fill="#1e1e1e"/><rect x="6" y="2" width="1" height="1" fill="#1e1e1e"/><rect x="8" y="4" width="1" height="1" fill="#1e1e1e"/><rect x="6" y="4" width="1" height="1" fill="#1e1e1e"/><rect x="4" y="4" width="1" height="1" fill="#1e1e1e"/><rect x="8" y="6" width="1" height="1" fill="#1e1e1e"/><rect x="6" y="6" width="1" height="1" fill="#1e1e1e"/><rect x="4" y="6" width="1" height="1" fill="#1e1e1e"/><rect x="2" y="6" width="1" height="1" fill="#1e1e1e"/><rect x="8" y="8" width="1" height="1" fill="#1e1e1e"/><rect x="6" y="8" width="1" height="1" fill="#1e1e1e"/><rect x="4" y="8" width="1" height="1" fill="#1e1e1e"/><rect x="2" y="8" width="1" height="1" fill="#1e1e1e"/><rect x="0" y="8" width="1" height="1" fill="#1e1e1e"/></svg>
<div style="left:1671px;top:626px;width:249px;height:241px;background:#494949"></div>
<div style="left:1671px;top:626px;width:249px;height:17px;background:#383838;border-bottom:1px solid #2e2e2e"></div>
<div style="left:1671px;top:626px;width:49px;height:17px;background:#494949;border-top:1px solid #606060;border-right:1px solid #2e2e2e"></div>
<svg style="left:1675px;top:630px;" width="7" height="10" viewBox="0 0 7 10"><path d="M.8 3.800L3.500.8l2.700 3M.8 6.200l2.700 3 2.700-3" fill="none" stroke="#e0e0e0" stroke-width="1.100"/></svg>
<div class="tb" style="left:1684px;top:627px">Farbe</div>
<div style="left:1720px;top:626px;width:78px;height:17px;background:#414141;border-top:1px solid #525252;border-right:1px solid #2e2e2e;border-bottom:1px solid #2e2e2e;overflow:hidden"><div class="tb" style="left:6px;top:0px;color:#a6a6a6">Transparenz</div></div>
<div style="left:1798px;top:626px;width:51px;height:17px;background:#414141;border-top:1px solid #525252;border-right:1px solid #2e2e2e;border-bottom:1px solid #2e2e2e;overflow:hidden"><div class="tb" style="left:6px;top:0px;color:#a6a6a6">Verlauf</div></div>
<svg style="left:1900px;top:630px;" width="14" height="11" viewBox="0 0 14 11"><path d="M0 3.500h5L2.500 6.500z" fill="#cfcfcf"/><path d="M6 1.600h8M6 3.900h8M6 6.200h8M6 8.500h8" stroke="#c8c8c8" stroke-width="1.100"/></svg>
<svg style="left:1676px;top:650px;" width="11" height="11" viewBox="0 0 11 11"><rect x="3.500" y="3.500" width="6" height="6" fill="#111" stroke="#e0e0e0"/><rect x=".5" y=".5" width="6" height="6" fill="#fff" stroke="#222"/></svg>
<svg style="left:1695px;top:649px;" width="11" height="11" viewBox="0 0 11 11"><path d="M1.500 3.500h4.500c2 0 3 1 3 3v2" fill="none" stroke="#d8d8d8" stroke-width="1.200"/><path d="M3.500 0L0 3.500 3.500 7zM5.500 7.500h7L9 11z" fill="#d8d8d8"/></svg>
<div style="left:1687px;top:678px;width:19px;height:19px;background:#000;border:1px solid #fff"><div style="left:3.5px;top:3.5px;width:10px;height:10px;background:#494949;border:1px solid #fff"></div></div>
<div style="left:1676px;top:667px;width:20px;height:20px;background:#fff;border:1px solid #494949"></div>
<div class="tb" style="left:1722px;top:655px;font-size:11px;color:#e0e0e0">C</div>
<div style="left:1741px;top:658px;width:113px;height:6px;background:linear-gradient(90deg,#fff,#3b8fe8);border-top:1px solid #2a2a2a;border-bottom:1px solid #6a6a6a"></div>
<svg style="left:1737px;top:664px;" width="10" height="7" viewBox="0 0 10 7"><path d="M.5 6.500h9L5 .5z" fill="#d4d4d4" stroke="#2a2a2a" stroke-width=".7"/></svg>
<div class="inp" style="left:1861px;top:653px;width:33px;height:18px;padding-left:5px;line-height:15px;font-size:11px">0</div>
<div class="tb" style="left:1895px;top:655px;font-size:11px;color:#e0e0e0">%</div>
<div class="tb" style="left:1722px;top:680px;font-size:11px;color:#e0e0e0">M</div>
<div style="left:1741px;top:683px;width:113px;height:6px;background:linear-gradient(90deg,#fff,#d8127d);border-top:1px solid #2a2a2a;border-bottom:1px solid #6a6a6a"></div>
<svg style="left:1737px;top:689px;" width="10" height="7" viewBox="0 0 10 7"><path d="M.5 6.500h9L5 .5z" fill="#d4d4d4" stroke="#2a2a2a" stroke-width=".7"/></svg>
<div class="inp" style="left:1861px;top:678px;width:33px;height:18px;padding-left:5px;line-height:15px;font-size:11px">0</div>
<div class="tb" style="left:1895px;top:680px;font-size:11px;color:#e0e0e0">%</div>
<div class="tb" style="left:1722px;top:705px;font-size:11px;color:#e0e0e0">Y</div>
<div style="left:1741px;top:708px;width:113px;height:6px;background:linear-gradient(90deg,#fff,#f4e400);border-top:1px solid #2a2a2a;border-bottom:1px solid #6a6a6a"></div>
<svg style="left:1737px;top:714px;" width="10" height="7" viewBox="0 0 10 7"><path d="M.5 6.500h9L5 .5z" fill="#d4d4d4" stroke="#2a2a2a" stroke-width=".7"/></svg>
<div class="inp" style="left:1861px;top:703px;width:33px;height:18px;padding-left:5px;line-height:15px;font-size:11px">0</div>
<div class="tb" style="left:1895px;top:705px;font-size:11px;color:#e0e0e0">%</div>
<div class="tb" style="left:1722px;top:730px;font-size:11px;color:#e0e0e0">K</div>
<div style="left:1741px;top:733px;width:113px;height:6px;background:linear-gradient(90deg,#fff,#1a1a1a);border-top:1px solid #2a2a2a;border-bottom:1px solid #6a6a6a"></div>
<svg style="left:1737px;top:739px;" width="10" height="7" viewBox="0 0 10 7"><path d="M.5 6.500h9L5 .5z" fill="#d4d4d4" stroke="#2a2a2a" stroke-width=".7"/></svg>
<div class="inp" style="left:1861px;top:728px;width:33px;height:18px;padding-left:5px;line-height:15px;font-size:11px">0</div>
<div class="tb" style="left:1895px;top:730px;font-size:11px;color:#e0e0e0">%</div>
<svg style="left:1677px;top:758px;" width="38.5" height="12.5" viewBox="0 0 39 13"><rect width="13" height="13" fill="#fff"/><path d="M0 13L13 0" stroke="#ee2211" stroke-width="3"/><rect x="13" width="13" height="13" fill="#000"/><rect x="26" width="13" height="13" fill="#fff"/></svg>
<div style="left:1677px;top:781px;width:224px;height:80px;border:1px solid #2a2a2a;background:linear-gradient(rgba(255,255,255,1) 0%,rgba(255,255,255,.78) 12%,rgba(255,255,255,.35) 30%,rgba(255,255,255,0) 52%,rgba(0,0,0,0) 58%,rgba(0,0,0,.45) 78%,rgba(0,0,0,.85) 92%,rgba(0,0,0,1) 100%),linear-gradient(90deg,#e8301c 0%,#f08a1a 7.6%,#f0e000 16%,#a8c820 23%,#5ab030 33%,#4cb070 42.5%,#5cc4ec 53.7%,#3a5cb0 61%,#2c3c96 69.5%,#6a3c98 78%,#a84a9c 85%,#e8308a 92%,#e8281c 100%)"></div>
<div style="left:1671px;top:870px;width:249px;height:106px;background:#494949"></div>
<div style="left:1671px;top:870px;width:249px;height:17px;background:#383838;border-bottom:1px solid #2e2e2e"></div>
<div style="left:1671px;top:870px;width:50px;height:17px;background:#414141;border-top:1px solid #525252;border-right:1px solid #2e2e2e;border-bottom:1px solid #2e2e2e;overflow:hidden"><div class="tb" style="left:6px;top:0px;color:#a6a6a6">Absatz</div></div>
<div style="left:1721px;top:870px;width:66px;height:17px;background:#494949;border-top:1px solid #606060;border-right:1px solid #2e2e2e"></div>
<div class="tb" style="left:1727px;top:871px">OpenType</div>
<svg style="left:1900px;top:874px;" width="14" height="11" viewBox="0 0 14 11"><path d="M0 3.500h5L2.500 6.500z" fill="#cfcfcf"/><path d="M6 1.600h8M6 3.900h8M6 6.200h8M6 8.500h8" stroke="#c8c8c8" stroke-width="1.100"/></svg>
<div class="t" style="right:202px;top:897px;font-size:11px">Zahl:</div>
<div class="t" style="right:202px;top:922px;font-size:11px">Position:</div>
<div class="btn" style="left:1722px;top:895px;width:183px;height:18px;padding-left:5px;line-height:15px;color:#e8e8e8;font-size:11px">Standardzahl</div>
<div style="left:1886px;top:897px;width:1px;height:14px;background:#3a3a3a"></div>
<svg style="left:1891px;top:901px" width="8" height="6"><path d="M0 0h8l-4.0 6z" fill="#e6e6e6"/></svg>
<div class="btn" style="left:1722px;top:921px;width:183px;height:18px;padding-left:5px;line-height:15px;color:#e8e8e8;font-size:11px">Standardposition</div>
<div style="left:1886px;top:923px;width:1px;height:14px;background:#3a3a3a"></div>
<svg style="left:1891px;top:927px" width="8" height="6"><path d="M0 0h8l-4.0 6z" fill="#e6e6e6"/></svg>
<div style="left:1688px;top:947px;width:23px;height:23px;background:#2f2f2f;border:1px solid #262626"></div>
<div style="left:1693px;top:948px;font-family:'Liberation Serif',serif;font-size:18px;line-height:20px;color:#e8e8e8">ﬁ</div>
<div style="left:1720.5px;top:948px;font-family:'Liberation Serif',serif;font-style:italic;font-size:17px;line-height:20px;color:#6e6e6e">&#x03C3;</div>
<div style="left:1746px;top:948px;font-family:'Liberation Serif',serif;font-size:16px;line-height:20px;color:#6e6e6e">st</div>
<div style="left:1771.5px;top:948px;font-family:'Liberation Serif',serif;font-style:italic;font-size:17px;line-height:20px;color:#6e6e6e">A</div>
<div style="left:1796px;top:949px;font-family:'Liberation Serif',serif;font-size:17px;line-height:20px;color:#e0e0e0;font-weight:bold;letter-spacing:.3px">aa</div>
<svg style="left:1796px;top:950px;" width="18" height="5" viewBox="0 0 18 5"><path d="M0 2.500h15M18 2.500l-4-2.500v5z" fill="#e0e0e0" stroke="#e0e0e0"/></svg>
<div style="left:1823px;top:948px;font-family:'Liberation Serif',serif;font-style:italic;font-size:17px;line-height:20px;color:#6e6e6e">T</div>
<div style="left:1848px;top:948px;font-family:'Liberation Serif',serif;font-size:17px;line-height:20px;color:#e8e8e8">1<span style="font-size:10px;vertical-align:6px;position:static">st</span></div>
<div style="left:1876px;top:949px;font-family:'Liberation Serif',serif;font-size:18px;line-height:20px;color:#e8e8e8">½</div>
<div style="left:1918px;top:0px;width:2px;height:978px;background:#232323;z-index:50"></div>
<svg style="left:0px;top:0px;z-index:51" width="5" height="5" viewBox="0 0 5 5"><path d="M0 0h5A5 5 0 0 0 0 5z" fill="#1a1a1a"/></svg>
<svg style="left:1913px;top:0px;z-index:51" width="5" height="5" viewBox="0 0 5 5"><path d="M5 0H0a5 5 0 0 1 5 5z" fill="#1a1a1a"/></svg>
</body></html>
